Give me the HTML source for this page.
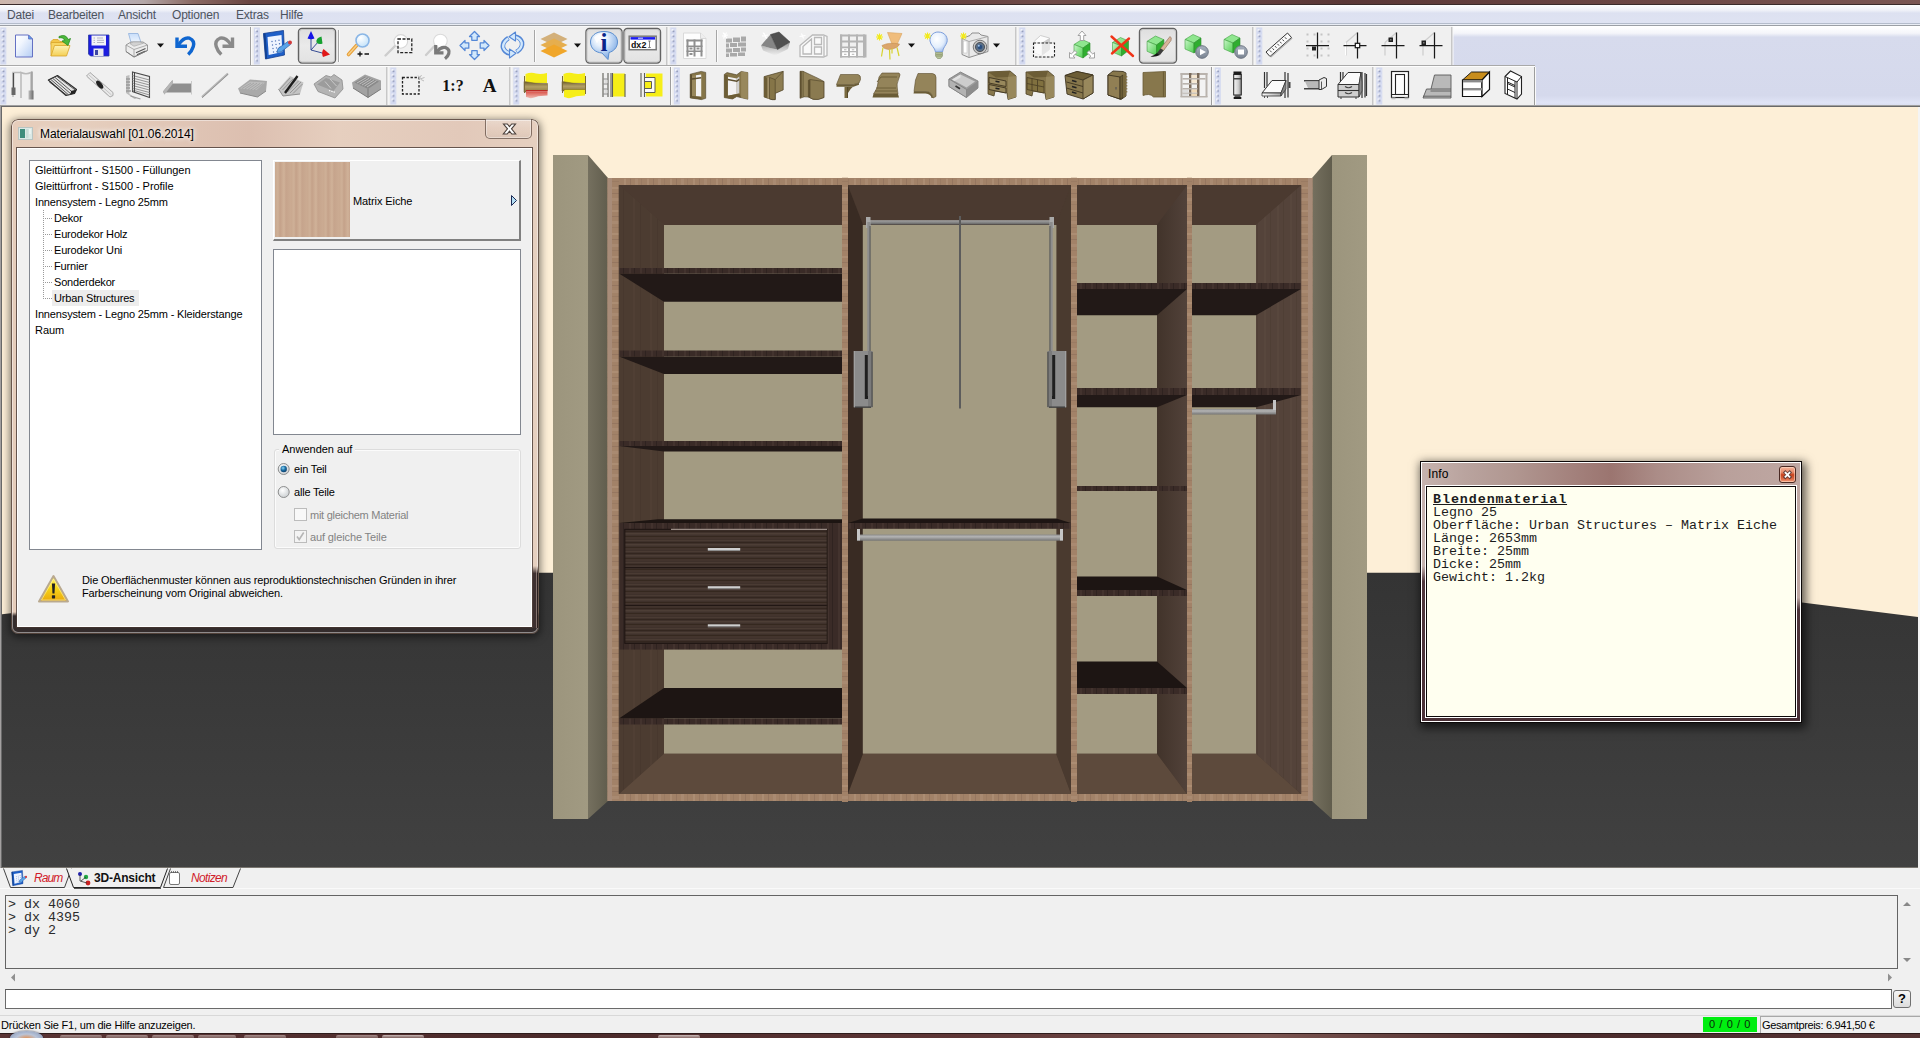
<!DOCTYPE html>
<html lang="de"><head><meta charset="utf-8"><title>Materialauswahl</title>
<style>
html,body{margin:0;padding:0}
body{width:1920px;height:1038px;position:relative;overflow:hidden;background:#f0f0f0;font-family:"Liberation Sans",sans-serif;font-size:11px;color:#000}
.abs{position:absolute}
div,span{box-sizing:border-box}
#topstrip{left:0;top:0;width:1920px;height:5px;background:linear-gradient(90deg,#cdb6ab 0,#c4b4b8 3%,#b9b2c0 5%,#b4a7a8 7.500%,#8b6a64 10%,#6a4542 13%,#5c3837 20%,#6d4946 33%,#5d3a3a 45%,#714c49 55%,#5a3737 70%,#6b4644 85%,#7a5653 100%)}
#topstrip:after{content:"";position:absolute;left:0;top:4px;width:1920px;height:1px;background:#3a2a2a}
#menubar{left:0;top:5px;width:1920px;height:18px;background:linear-gradient(180deg,#fdfdfe 0,#eef0f8 30%,#dde1f1 45%,#dfe3f2 100%)}
#menubar span{position:absolute;top:3px;font-size:12px;color:#4d545e;white-space:nowrap;letter-spacing:-0.2px}
#menuline{left:0;top:23px;width:1920px;height:4px;background:linear-gradient(180deg,#b4bccb 0,#b4bccb 25%,#e9edf5 25%,#e9edf5 50%,#9b9fa5 50%,#9b9fa5 75%,#fff 75%)}
#tbbg{left:0;top:27px;width:1920px;height:78px;background:linear-gradient(180deg,#fff 0,#f4f5fa 8%,#d7dbed 13%,#d5d9ec 88%,#e0e4f6 97%,#dadef0 100%)}
.tb{position:absolute;background:#f0f0f0;border-right:1px solid #b8b8b8}
#viewborder{left:0;top:105px;width:1920px;height:763px;background:#696969;border-top:1px solid #a0a0a0;border-left:1px solid #a3a0a0}
#viewborder2{left:1918px;top:107px;width:2px;height:761px;background:#f4f4f4}
.grip{position:absolute;width:3px;background-image:repeating-linear-gradient(180deg,#aab3d8 0,#aab3d8 2px,rgba(255,255,255,.8) 2px,rgba(255,255,255,.8) 3px,transparent 3px,transparent 4px)}
</style></head><body>
<div id="topstrip" class="abs"></div>
<div id="menubar" class="abs"><span style="left:7px">Datei</span><span style="left:48px">Bearbeiten</span><span style="left:118px">Ansicht</span><span style="left:172px">Optionen</span><span style="left:236px">Extras</span><span style="left:280px">Hilfe</span></div>
<div id="menuline" class="abs"></div>
<div id="tbbg" class="abs"></div>
<div id="viewborder" class="abs"></div>

<svg width="1920" height="1038" viewBox="0 0 1920 1038" style="position:absolute;left:0;top:0"><defs>
<linearGradient id="blf" x1="0" x2="1" y1="0" y2="0"><stop offset="0" stop-color="#9c957d"/><stop offset="1" stop-color="#a19a82"/></linearGradient>
<linearGradient id="bls" x1="0" x2="1" y1="0" y2="0"><stop offset="0" stop-color="#75705f"/><stop offset="1" stop-color="#615d4d"/></linearGradient>
<linearGradient id="flr" x1="0" x2="0" y1="0" y2="1"><stop offset="0" stop-color="#343434"/><stop offset="1" stop-color="#414141"/></linearGradient>
<pattern id="edgeV" width="7" height="23" patternUnits="userSpaceOnUse"><rect width="7" height="23" fill="#a28268"/><rect y="3" width="7" height="2" fill="#ac8d73"/><rect y="9" width="7" height="1" fill="#957660"/><rect y="14" width="7" height="3" fill="#a98a71"/><rect y="20" width="7" height="1" fill="#9a7b63"/></pattern>
<pattern id="edgeH" width="23" height="7" patternUnits="userSpaceOnUse"><rect width="23" height="7" fill="#a28268"/><rect x="3" width="2" height="7" fill="#ac8d73"/><rect x="9" width="1" height="7" fill="#957660"/><rect x="14" width="3" height="7" fill="#a98a71"/><rect x="20" width="1" height="7" fill="#9a7b63"/></pattern>
<pattern id="inw" width="17" height="8" patternUnits="userSpaceOnUse"><rect width="17" height="8" fill="#4c3c31"/><rect x="4" width="2" height="8" fill="#503f34"/><rect x="11" width="1" height="8" fill="#48382e"/></pattern>
<linearGradient id="inw3" x1="0" x2="1" y1="0" y2="0"><stop offset="0" stop-color="#41332a"/><stop offset="1" stop-color="#52423a"/></linearGradient>
<pattern id="inw4" width="13" height="8" patternUnits="userSpaceOnUse"><rect width="13" height="8" fill="#54433a"/><rect x="3" width="2" height="8" fill="#58473d"/><rect x="9" width="1" height="8" fill="#4f3f35"/></pattern>
<pattern id="she" width="11" height="8" patternUnits="userSpaceOnUse"><rect width="11" height="8" fill="#3a2b27"/><rect x="2" width="2" height="8" fill="#43332e"/><rect x="7" width="1" height="8" fill="#2f2320"/></pattern>
<pattern id="drw" width="40" height="11" patternUnits="userSpaceOnUse"><rect width="40" height="11" fill="#3f312b"/><rect y="1" width="40" height="1" fill="#4a3b33"/><rect y="3" width="40" height="1" fill="#33261f"/><rect y="5" width="40" height="1.500" fill="#4d3e36"/><rect y="8" width="40" height="1" fill="#35281f"/><rect y="9.500" width="40" height="1" fill="#46372f"/></pattern>
<linearGradient id="rod2" x1="0" x2="0" y1="0" y2="1"><stop offset="0" stop-color="#a5a5a5"/><stop offset="0.5" stop-color="#868686"/><stop offset="1" stop-color="#5e5e5e"/></linearGradient>
<linearGradient id="rod" x1="0" x2="0" y1="0" y2="1"><stop offset="0" stop-color="#8c8c8c"/><stop offset="0.35" stop-color="#b4b4b4"/><stop offset="1" stop-color="#747474"/></linearGradient>
<clipPath id="vp"><rect x="2" y="107" width="1916" height="760.600"/></clipPath>
</defs>
<g clip-path="url(#vp)">
<rect x="0.0" y="100.0" width="1920.0" height="780.0" fill="#fdefd7" />
<polygon points="0.0,614.5 359.0,572.7 1564.0,572.7 1920.0,617.3 1920.0,870.0 0.0,870.0" fill="url(#flr)" />
<polygon points="553.0,155.0 588.0,155.0 588.0,819.0 553.0,819.0" fill="url(#blf)" />
<polygon points="588.0,155.0 608.0,178.0 608.0,801.0 588.0,819.0" fill="url(#bls)" />
<polygon points="1332.0,155.0 1367.0,155.0 1367.0,819.0 1332.0,819.0" fill="url(#blf)" />
<polygon points="1332.0,155.0 1312.0,178.0 1312.0,801.0 1332.0,819.0" fill="url(#bls)" />
<rect x="607.5" y="178.0" width="705.0" height="623.0" fill="url(#edgeV)" />
<rect x="607.5" y="178.0" width="4.5" height="623.0" fill="#a88c79" />
<rect x="1308.0" y="178.0" width="4.5" height="623.0" fill="#a88c79" />
<rect x="619.0" y="178.7" width="682.0" height="6.3" fill="url(#edgeH)" />
<rect x="619.0" y="794.0" width="682.0" height="7.0" fill="url(#edgeH)" />
<rect x="619.0" y="185.0" width="223.0" height="609.0" fill="#4c3c31" />
<polygon points="619.0,185.0 842.0,185.0 842.0,225.0 664.0,225.0" fill="#4b3a30" />
<polygon points="619.0,794.0 842.0,794.0 842.0,753.6 664.0,753.6" fill="#5d4a3c" />
<polygon points="618.7,185.0 664.3,225.0 664.3,753.6 618.7,794.0" fill="url(#inw)" />
<rect x="664.0" y="225.0" width="178.0" height="528.6" fill="#a39b82" />
<rect x="848.0" y="185.0" width="223.0" height="609.0" fill="#4c3c31" />
<polygon points="848.0,185.0 1071.0,185.0 1056.3,225.0 862.8,225.0" fill="#4b3a30" />
<polygon points="848.0,794.0 1071.0,794.0 1056.3,753.6 862.8,753.6" fill="#5d4a3c" />
<polygon points="847.7,185.0 863.1,225.0 863.1,753.6 847.7,794.0" fill="#392b23" />
<polygon points="1071.3,185.0 1056.0,225.0 1056.0,753.6 1071.3,794.0" fill="#4a3a2f" />
<rect x="862.8" y="225.0" width="193.6" height="528.6" fill="#a39b82" />
<rect x="1077.0" y="185.0" width="110.0" height="609.0" fill="#4c3c31" />
<polygon points="1077.0,185.0 1187.0,185.0 1157.0,225.0 1077.0,225.0" fill="#4b3a30" />
<polygon points="1077.0,794.0 1187.0,794.0 1157.0,753.6 1077.0,753.6" fill="#5d4a3c" />
<polygon points="1187.3,185.0 1156.7,225.0 1156.7,753.6 1187.3,794.0" fill="url(#inw3)" />
<rect x="1077.0" y="225.0" width="80.0" height="528.6" fill="#a39b82" />
<rect x="1192.0" y="185.0" width="109.0" height="609.0" fill="#4c3c31" />
<polygon points="1192.0,185.0 1301.0,185.0 1256.0,225.0 1192.0,225.0" fill="#4b3a30" />
<polygon points="1192.0,794.0 1301.0,794.0 1256.0,753.6 1192.0,753.6" fill="#5d4a3c" />
<polygon points="1301.3,185.0 1255.7,225.0 1255.7,753.6 1301.3,794.0" fill="url(#inw4)" />
<rect x="1192.0" y="225.0" width="64.0" height="528.6" fill="#a39b82" />
<rect x="842.0" y="177.7" width="6.0" height="624.3" fill="url(#edgeV)" />
<rect x="1071.0" y="177.7" width="6.0" height="624.3" fill="url(#edgeV)" />
<rect x="1187.0" y="177.7" width="5.0" height="624.3" fill="url(#edgeV)" />
<clipPath id="c0"><rect x="619" y="178.7" width="223" height="622.3"/></clipPath>
<clipPath id="c1"><rect x="848" y="178.7" width="223" height="622.3"/></clipPath>
<clipPath id="c2"><rect x="1077" y="178.7" width="110" height="622.3"/></clipPath>
<clipPath id="c3"><rect x="1192" y="178.7" width="109" height="622.3"/></clipPath>
<polygon points="619.0,273.5 842.0,273.5 857.6,301.8 664.0,301.8" fill="#221917" clip-path="url(#c0)"/>
<rect x="619.0" y="268.0" width="223.0" height="5.5" fill="url(#she)" />
<polygon points="619.0,356.5 842.0,356.5 857.6,373.9 664.0,373.9" fill="#221917" clip-path="url(#c0)"/>
<rect x="619.0" y="350.5" width="223.0" height="6.0" fill="url(#she)" />
<polygon points="619.0,446.0 842.0,446.0 857.6,451.5 664.0,451.5" fill="#221917" clip-path="url(#c0)"/>
<rect x="619.0" y="441.0" width="223.0" height="5.0" fill="url(#she)" />
<polygon points="619.0,718.5 842.0,718.5 857.6,688.1 664.0,688.1" fill="#1d1513" clip-path="url(#c0)"/>
<rect x="619.0" y="718.5" width="223.0" height="6.0" fill="url(#she)" />
<polygon points="619.0,523.0 842.0,523.0 842.0,519.2 658.0,519.2" fill="#1d1512" />
<rect x="619.0" y="523.0" width="223.0" height="126.6" fill="url(#she)" />
<rect x="625.0" y="530.0" width="202.0" height="37.0" fill="url(#drw)" />
<rect x="625.0" y="568.0" width="202.0" height="37.0" fill="url(#drw)" />
<rect x="625.0" y="606.0" width="202.0" height="37.0" fill="url(#drw)" />
<rect x="624.5" y="528.8" width="203.0" height="1.4" fill="#211714" />
<rect x="624.5" y="566.8" width="203.0" height="1.4" fill="#211714" />
<rect x="624.5" y="604.8" width="203.0" height="1.4" fill="#211714" />
<rect x="624.5" y="642.6" width="203.0" height="1.4" fill="#211714" />
<rect x="624.2" y="529.0" width="1.2" height="114.5" fill="#211714" />
<rect x="826.6" y="529.0" width="1.2" height="114.5" fill="#2a1e1a" />
<rect x="671.0" y="528.8" width="156.0" height="1.0" fill="#b9aaa2" />
<rect x="707.8" y="548.0" width="32.4" height="2.0" fill="#cfcfcf" />
<rect x="707.8" y="550.0" width="32.4" height="1.0" fill="#8e8e8e" />
<rect x="707.8" y="586.2" width="32.4" height="2.0" fill="#cfcfcf" />
<rect x="707.8" y="588.2" width="32.4" height="1.0" fill="#8e8e8e" />
<rect x="707.8" y="624.3" width="32.4" height="2.0" fill="#cfcfcf" />
<rect x="707.8" y="626.3" width="32.4" height="1.0" fill="#8e8e8e" />
<polygon points="848.0,523.0 1071.0,523.0 1056.3,518.4 862.8,518.4" fill="#1d1513" clip-path="url(#c1)"/>
<rect x="848.0" y="523.0" width="223.0" height="5.8" fill="url(#she)" />
<rect x="857.0" y="534.5" width="206.0" height="6.2" fill="url(#rod)" />
<rect x="857.0" y="529.0" width="3.0" height="11.5" fill="#c6c6c6" />
<rect x="1060.0" y="529.0" width="3.0" height="11.5" fill="#c6c6c6" />
<rect x="868.0" y="220.2" width="184.0" height="4.4" fill="url(#rod2)" />
<rect x="866.0" y="217.0" width="4.5" height="11.0" fill="#a9a9a9" />
<rect x="867.3" y="222.0" width="3.0" height="130.0" fill="#8d8d8d" />
<rect x="869.6" y="226.0" width="0.9" height="126.0" fill="#4e4e4e" />
<rect x="853.8" y="351.0" width="18.6" height="56.3" fill="#8b8b8b" />
<rect x="853.8" y="351.0" width="1.0" height="56.3" fill="#a5a5a5" />
<rect x="864.8" y="355.0" width="3.0" height="44.0" fill="#1f1f1f" />
<rect x="866.0" y="396.0" width="3.5" height="3.0" fill="#1f1f1f" />
<rect x="868.0" y="351.0" width="4.4" height="56.3" fill="#7a7a7a" />
<rect x="871.6" y="352.0" width="0.9" height="55.0" fill="#3c3c3c" />
<rect x="855.0" y="406.5" width="16.0" height="1.3" fill="#3c3c3c" />
<rect x="1049.5" y="217.0" width="4.5" height="11.0" fill="#a9a9a9" />
<rect x="1049.7" y="222.0" width="3.0" height="130.0" fill="#8d8d8d" />
<rect x="1049.5" y="226.0" width="0.9" height="126.0" fill="#4e4e4e" />
<rect x="1047.6" y="351.0" width="18.6" height="56.3" fill="#8b8b8b" />
<rect x="1065.2" y="351.0" width="1.0" height="56.3" fill="#a5a5a5" />
<rect x="1052.2" y="355.0" width="3.0" height="44.0" fill="#1f1f1f" />
<rect x="1050.5" y="396.0" width="3.5" height="3.0" fill="#1f1f1f" />
<rect x="1047.6" y="351.0" width="4.4" height="56.3" fill="#7a7a7a" />
<rect x="1047.5" y="352.0" width="0.9" height="55.0" fill="#3c3c3c" />
<rect x="1049.0" y="406.5" width="16.0" height="1.3" fill="#3c3c3c" />
<rect x="959.0" y="216.0" width="2.0" height="192.5" fill="#5c5c5c" />
<polygon points="1077.0,289.0 1187.0,289.0 1157.0,315.3 1061.6,315.3" fill="#221917" clip-path="url(#c2)"/>
<rect x="1077.0" y="283.0" width="110.0" height="6.0" fill="url(#she)" />
<polygon points="1077.0,395.0 1187.0,395.0 1157.0,407.3 1061.6,407.3" fill="#221917" clip-path="url(#c2)"/>
<rect x="1077.0" y="388.0" width="110.0" height="7.0" fill="url(#she)" />
<rect x="1077.0" y="486.0" width="110.0" height="5.0" fill="url(#she)" />
<polygon points="1077.0,590.0 1187.0,590.0 1157.0,576.5 1061.6,576.5" fill="#1d1513" clip-path="url(#c2)"/>
<rect x="1077.0" y="590.0" width="110.0" height="6.0" fill="url(#she)" />
<polygon points="1077.0,688.0 1187.0,688.0 1157.0,661.6 1061.6,661.6" fill="#1d1513" clip-path="url(#c2)"/>
<rect x="1077.0" y="688.0" width="110.0" height="6.0" fill="url(#she)" />
<polygon points="1192.0,289.0 1301.0,289.0 1256.0,315.3 1161.4,315.3" fill="#221917" clip-path="url(#c3)"/>
<rect x="1192.0" y="283.0" width="109.0" height="6.0" fill="url(#she)" />
<polygon points="1192.0,395.0 1301.0,395.0 1256.0,407.3 1161.4,407.3" fill="#221917" clip-path="url(#c3)"/>
<rect x="1192.0" y="388.0" width="109.0" height="7.0" fill="url(#she)" />
<rect x="1192.0" y="409.0" width="84.0" height="5.5" fill="url(#rod)" />
<rect x="1273.0" y="400.0" width="3.0" height="10.0" fill="#c4c4c4" />
</g></svg>
<svg class="abs" style="left:0;top:0" width="1920" height="108" viewBox="0 0 1920 108"><defs>
<linearGradient id="gNew" x1="0" y1="0" x2="1" y2="1"><stop offset="0" stop-color="#fff"/><stop offset=".35" stop-color="#f1f6fe"/><stop offset="1" stop-color="#b4cdf4"/></linearGradient>
<linearGradient id="gFold" x1="0" y1="0" x2="0" y2="1"><stop offset="0" stop-color="#fdf3b6"/><stop offset="1" stop-color="#f4cf55"/></linearGradient>
<linearGradient id="gPap" x1="0" y1="0" x2="0" y2="1"><stop offset="0" stop-color="#c8defa"/><stop offset="1" stop-color="#f4f8fe"/></linearGradient>
<radialGradient id="gLens" cx=".35" cy=".3" r=".8"><stop offset="0" stop-color="#fff"/><stop offset="1" stop-color="#bfe0f9"/></radialGradient>
<radialGradient id="gInfo" cx=".38" cy=".28" r=".8"><stop offset="0" stop-color="#fff"/><stop offset=".3" stop-color="#e6f0fc"/><stop offset=".65" stop-color="#a9c8ef"/><stop offset="1" stop-color="#6b9ade"/></radialGradient>
<radialGradient id="gBulb" cx=".4" cy=".35" r=".7"><stop offset="0" stop-color="#fff"/><stop offset=".6" stop-color="#e3eefc"/><stop offset="1" stop-color="#9cb9ea"/></radialGradient>
<linearGradient id="gRoofSh" x1="0" y1="0" x2="0" y2="1"><stop offset="0" stop-color="#9a9a9a"/><stop offset=".5" stop-color="#c9c9c9"/><stop offset="1" stop-color="#f0f0f0"/></linearGradient>
<linearGradient id="gCubeL" x1="0" y1="0" x2="1" y2="1"><stop offset="0" stop-color="#c9f5c9"/><stop offset="1" stop-color="#4fcf4f"/></linearGradient>
<linearGradient id="gBtn" x1="0" y1="0" x2="0" y2="1"><stop offset="0" stop-color="#a9b2bf"/><stop offset="1" stop-color="#7a8492"/></linearGradient>
<linearGradient id="gGrayV" x1="0" y1="0" x2="1" y2="0"><stop offset="0" stop-color="#bdbdbd"/><stop offset="1" stop-color="#6a6a6a"/></linearGradient>
<linearGradient id="gBr" x1="0" y1="0" x2="0" y2="1"><stop offset="0" stop-color="#6e5c2c"/><stop offset=".5" stop-color="#b3a067"/><stop offset="1" stop-color="#8a7740"/></linearGradient>
<linearGradient id="gRedF" x1="0" y1="0" x2="0" y2="1"><stop offset="0" stop-color="#d9534a"/><stop offset="1" stop-color="#f0b9b0"/></linearGradient>
<linearGradient id="gLeg" x1="0" y1="0" x2="1" y2="0"><stop offset="0" stop-color="#f7f7f7"/><stop offset=".6" stop-color="#cfcfcf"/><stop offset="1" stop-color="#8a8a8a"/></linearGradient>
<linearGradient id="gShelfF" x1="0" y1="0" x2="1" y2="0"><stop offset="0" stop-color="#fff"/><stop offset="1" stop-color="#aaa"/></linearGradient>
<linearGradient id="gPress" x1="0" y1="0" x2="0" y2="1"><stop offset="0" stop-color="#dedede"/><stop offset=".5" stop-color="#eaeaea"/><stop offset="1" stop-color="#e2e2e2"/></linearGradient>
<pattern id="pGrip" width="4" height="4.900" patternUnits="userSpaceOnUse"><rect x=".2" y=".3" width="2" height="2" fill="#fff"/><rect x="1.400" y="1.500" width="1.700" height="1.700" fill="#8a93b4"/></pattern>
</defs>
<rect x="0" y="26.500" width="1452.500" height="38.500" fill="#f0f0f0"/>
<rect x="0" y="66.500" width="1535" height="38.500" fill="#f0f0f0"/>
<rect x="0" y="65" width="1535" height="1" fill="#a9a9a9"/><rect x="0" y="66" width="1535" height="1" fill="#fdfdfd"/>
<rect x="250.0" y="27" width="1" height="38" fill="#9d9d9d"/><rect x="251.0" y="27" width="1" height="38" fill="#fafafa"/>
<rect x="0.3" y="27.5" width="6" height="37" fill="#d4daf0"/><g transform="translate(1.3,29.0)"><rect width="4" height="34" fill="url(#pGrip)"/></g>
<rect x="666.5" y="27" width="1" height="38" fill="#9d9d9d"/><rect x="667.5" y="27" width="1" height="38" fill="#fafafa"/>
<rect x="253.8" y="27.5" width="6" height="37" fill="#d4daf0"/><g transform="translate(254.8,29.0)"><rect width="4" height="34" fill="url(#pGrip)"/></g>
<rect x="1015.5" y="27" width="1" height="38" fill="#9d9d9d"/><rect x="1016.5" y="27" width="1" height="38" fill="#fafafa"/>
<rect x="670.3" y="27.5" width="6" height="37" fill="#d4daf0"/><g transform="translate(671.3,29.0)"><rect width="4" height="34" fill="url(#pGrip)"/></g>
<rect x="1252.5" y="27" width="1" height="38" fill="#9d9d9d"/><rect x="1253.5" y="27" width="1" height="38" fill="#fafafa"/>
<rect x="1019.3" y="27.5" width="6" height="37" fill="#d4daf0"/><g transform="translate(1020.3,29.0)"><rect width="4" height="34" fill="url(#pGrip)"/></g>
<rect x="1451.5" y="27" width="1" height="38" fill="#9d9d9d"/><rect x="1452.5" y="27" width="1" height="38" fill="#fafafa"/>
<rect x="1256.3" y="27.5" width="6" height="37" fill="#d4daf0"/><g transform="translate(1257.3,29.0)"><rect width="4" height="34" fill="url(#pGrip)"/></g>
<rect x="386.5" y="67" width="1" height="38" fill="#9d9d9d"/><rect x="387.5" y="67" width="1" height="38" fill="#fafafa"/>
<rect x="0.3" y="67.5" width="6" height="37" fill="#d4daf0"/><g transform="translate(1.3,69.0)"><rect width="4" height="34" fill="url(#pGrip)"/></g>
<rect x="509.5" y="67" width="1" height="38" fill="#9d9d9d"/><rect x="510.5" y="67" width="1" height="38" fill="#fafafa"/>
<rect x="390.3" y="67.5" width="6" height="37" fill="#d4daf0"/><g transform="translate(391.3,69.0)"><rect width="4" height="34" fill="url(#pGrip)"/></g>
<rect x="670.0" y="67" width="1" height="38" fill="#9d9d9d"/><rect x="671.0" y="67" width="1" height="38" fill="#fafafa"/>
<rect x="513.3" y="67.5" width="6" height="37" fill="#d4daf0"/><g transform="translate(514.3,69.0)"><rect width="4" height="34" fill="url(#pGrip)"/></g>
<rect x="1211.0" y="67" width="1" height="38" fill="#9d9d9d"/><rect x="1212.0" y="67" width="1" height="38" fill="#fafafa"/>
<rect x="673.8" y="67.5" width="6" height="37" fill="#d4daf0"/><g transform="translate(674.8,69.0)"><rect width="4" height="34" fill="url(#pGrip)"/></g>
<rect x="1372.5" y="67" width="1" height="38" fill="#9d9d9d"/><rect x="1373.5" y="67" width="1" height="38" fill="#fafafa"/>
<rect x="1214.8" y="67.5" width="6" height="37" fill="#d4daf0"/><g transform="translate(1215.8,69.0)"><rect width="4" height="34" fill="url(#pGrip)"/></g>
<rect x="1534.0" y="67" width="1" height="38" fill="#9d9d9d"/><rect x="1535.0" y="67" width="1" height="38" fill="#fafafa"/>
<rect x="1376.3" y="67.5" width="6" height="37" fill="#d4daf0"/><g transform="translate(1377.3,69.0)"><rect width="4" height="34" fill="url(#pGrip)"/></g>
<rect x="338.0" y="30" width="1" height="32" fill="#a6a6a6"/><rect x="339.0" y="30" width="1" height="32" fill="#fbfbfb"/>
<rect x="534.0" y="30" width="1" height="32" fill="#a6a6a6"/><rect x="535.0" y="30" width="1" height="32" fill="#fbfbfb"/>
<rect x="716.0" y="30" width="1" height="32" fill="#a6a6a6"/><rect x="717.0" y="30" width="1" height="32" fill="#fbfbfb"/>
<rect x="298.5" y="28.500" width="37" height="34.500" rx="3.500" fill="url(#gPress)" stroke="#636363" stroke-width="1.400"/><rect x="299.5" y="29.500" width="35" height="32.500" rx="2.500" fill="none" stroke="#c6c6c6" stroke-width="1"/>
<rect x="586.0" y="28.500" width="36.0" height="34.500" rx="3.500" fill="url(#gPress)" stroke="#636363" stroke-width="1.400"/><rect x="587.0" y="29.500" width="34.0" height="32.500" rx="2.500" fill="none" stroke="#c6c6c6" stroke-width="1"/>
<rect x="624.0" y="28.500" width="36.5" height="34.500" rx="3.500" fill="url(#gPress)" stroke="#636363" stroke-width="1.400"/><rect x="625.0" y="29.500" width="34.5" height="32.500" rx="2.500" fill="none" stroke="#c6c6c6" stroke-width="1"/>
<rect x="1139.5" y="28.500" width="37" height="34.500" rx="3.500" fill="url(#gPress)" stroke="#636363" stroke-width="1.400"/><rect x="1140.5" y="29.500" width="35" height="32.500" rx="2.500" fill="none" stroke="#c6c6c6" stroke-width="1"/>
<g transform="translate(24,45.5)"><path d="M-8.500 -10.500 H4.500 L8.500 -6.500 V11.500 H-8.500z" fill="url(#gNew)" stroke="#6471c4"/><path d="M4.500 -10.500 V-6.500 H8.500z" fill="#5aa0ea" stroke="#6471c4" stroke-width=".8"/></g>
<g transform="translate(61,45.5)"><path d="M-10 -4 l2 -2 h5 l2 2 h7 v3 h-16z" fill="#f3c64a" stroke="#d9a428" stroke-width=".8"/><path d="M-10 10.500 V-3 h15 l1 2 v3" fill="#f7d563" stroke="#d9a428" stroke-width=".8"/><path d="M-10 10.500 L-6.500 0 H9 L5.500 10.500z" fill="url(#gFold)" stroke="#d9a428" stroke-width=".8"/><path d="M-2 -9 q7 -3 9 3 l2.500 -1 l-2.500 7 l-6 -4.500 l2.800 -.6 q-1.500 -3.500 -5.800 -2.500z" fill="#4cb83c" stroke="#2c8f22" stroke-width=".8"/></g>
<g transform="translate(98.5,45.5)"><path d="M-10 -10.500 H10.500 V10.500 H-8 L-10 8.500z" fill="#1c1cdf" stroke="#2a3aa0" stroke-width=".8"/><rect x="-7" y="-10" width="14.500" height="10" fill="#f3f3f7"/><path d="M-5 -7.500 h1.500 m2 0 h6 M-5 -5.200 h1.500 m2 0 h7 M-5 -3 h1.500 m2 0 h7" stroke="#b4b4c4" stroke-width="1"/><rect x="-5" y="3" width="10" height="7.500" fill="#e9e9ef"/><rect x="-3.500" y="4.500" width="3" height="5" fill="#3c46a4"/></g>
<g transform="translate(137,45.5)"><path d="M-8.500 -12 H1 L4.500 -1.500 H-5.500z" fill="url(#gPap)" stroke="#8fb0dc" stroke-width=".8"/><path d="M-11 -.5 L-6 -3.500 H6 L10.500 -.5 V5 L-3 11.500 L-11 6z" fill="#ececec" stroke="#8d8d8d" stroke-width=".9"/><path d="M-11 -.5 L-3 4 L10.500 -.5 M-3 4 V11.500" fill="none" stroke="#9a9a9a" stroke-width=".8"/><path d="M-7 -1.800 L-3 .8 L6.500 -2.200 L3 -3.500 H-4z" fill="#d2d2d2" stroke="#999" stroke-width=".5"/><path d="M-1 7.300 l9.500 -4.200 M0 9.300 l8.500 -3.800" stroke="#555" stroke-width="1.100"/><path d="M-11 6 L-3 11.500 L10.500 5" stroke="#7a7a7a" stroke-width=".9" fill="none"/></g>
<g transform="translate(160.5,45.5)"><path d="M-3.500 -2 H3.500 L0 2z" fill="#111"/></g>
<g transform="translate(185,45.5)"><path d="M-8 -8 V.8 H2" fill="none" stroke="#0f66d0" stroke-width="3.400" stroke-linejoin="miter"/><path d="M-6.500 -.8 Q-1 -8.800 4.500 -7.300 Q10 -5 8.300 1 Q7 5.500 3.200 9" fill="none" stroke="#0f66d0" stroke-width="3.400"/></g>
<g transform="translate(224.5,45.5)"><path d="M8 -8 V.8 H-2" fill="none" stroke="#8a8a8a" stroke-width="3.400" stroke-linejoin="miter"/><path d="M6.500 -.8 Q1 -8.800 -4.500 -7.300 Q-10 -5 -8.300 1 Q-7 5.500 -3.200 9" fill="none" stroke="#8a8a8a" stroke-width="3.400"/></g>
<g transform="translate(278,45.5)"><path d="M-14.500 -12 L5.500 -15 L6.500 9.500 L-12.500 13.500z" fill="#1e5fc8" stroke="#153f8f" stroke-width=".8"/><path d="M-12.500 13.500 L-14.500 -12 L-12.500 -12.300 L-10.800 13z" fill="#12408f"/><path d="M-10.500 -8.500 L3.500 -10.500 L4.300 6.500 L-9.300 9.500z" fill="#eef4ff"/><g fill="#4a6fb5"><circle cx="-6" cy="-4" r=".7"/><circle cx="-2.500" cy="-4.600" r=".7"/><circle cx="1" cy="-5.200" r=".7"/><circle cx="-5.500" cy="-.5" r=".7"/><circle cx="-2" cy="-1.100" r=".7"/><circle cx="1.500" cy="-1.700" r=".7"/><circle cx="-5" cy="3" r=".7"/><circle cx="-1.500" cy="2.400" r=".7"/><circle cx="2" cy="1.800" r=".7"/><circle cx="-4.500" cy="6.500" r=".7"/><circle cx="-1" cy="5.900" r=".7"/></g><path d="M0 3 L10 -4 L12.500 -1 L3 6.500 L-1 7z" fill="#5aa4e8" stroke="#2b5fa8" stroke-width=".7"/><circle cx="12" cy="-3" r="2" fill="#d23b3b"/></g>
<g transform="translate(317,45.5)"><g transform="translate(0,-1.500)"><path d="M-6 -7 V6 L7 9.500 M-6 6 L2 -3" stroke="#223a8a" stroke-width=".9" fill="none"/><path d="M-6 -13 L-9.500 -5.500 Q-6 -4 -2.500 -5.500z" fill="#1414e6"/><path d="M4.500 -7.500 Q-1.500 -6 -.5 -1.500 Q2 1 5.500 -.5z" fill="#16a030"/><path d="M13 10.500 L6.500 5 Q4 8.500 6 13z" fill="#e01818"/></g></g>
<g transform="translate(358.5,45.5)"><path d="M-10 9 L-2 0" stroke="#e8a03a" stroke-width="3.600" stroke-linecap="round"/><path d="M-10 9 L-2 0" stroke="#f6d08a" stroke-width="1.300" stroke-linecap="round"/><circle cx="4" cy="-5" r="6.500" fill="url(#gLens)" stroke="#8ab6e6" stroke-width="1.600"/><path d="M-1 8.500 h5 M1.500 6 v5 M6 8.500 h4.500" stroke="#111" stroke-width="1.300"/></g>
<g transform="translate(399,45.5)"><path d="M-13.500 10 L-4 .5" stroke="#cdcdcd" stroke-width="2.400" stroke-linecap="round"/><circle cx="1.800" cy="-4.100" r="6.800" fill="#fff" stroke="#d6d6d6" stroke-width="1.100"/><rect x="-1" y="-6.500" width="13.800" height="13.600" fill="none" stroke="#222" stroke-width="1.300" stroke-dasharray="3 1.500"/></g>
<g transform="translate(438,45.5)"><path d="M-12 9.500 L-4 1" stroke="#cdcdcd" stroke-width="2.400" stroke-linecap="round"/><circle cx="2.400" cy="-4.500" r="6.800" fill="#fff" stroke="#dadada" stroke-width="1.100"/><path d="M-2.300 -.5 V7.300 H5.500" fill="none" stroke="#7a7a7a" stroke-width="3.200"/><path d="M-1 6 Q3 .8 7.500 2 Q12 4 10.800 8 Q10 11 7 13.200" fill="none" stroke="#7a7a7a" stroke-width="3.200"/></g>
<g transform="translate(474.5,45.5)"><g fill="#d2e8fc" stroke="#5588d6" stroke-width="1.250" stroke-linejoin="round"><path d="M0 -14 L5 -9 H2.700 V-5.200 H-2.700 V-9 H-5z"/><path d="M0 14 L5 9 H2.700 V5.200 H-2.700 V9 H-5z"/><path d="M-14.500 0 L-9.500 -5 V-2.700 H-5.700 V2.700 H-9.500 V5z"/><path d="M14.500 0 L9.500 -5 V-2.700 H5.700 V2.700 H9.500 V5z"/></g></g>
<g transform="translate(512.5,45.5)"><g fill="none" stroke-linecap="butt"><path d="M-4 -7.500 Q-10.500 -3.500 -9.500 2 Q-8 7 -2.500 8" stroke="#5588d6" stroke-width="4.600"/><path d="M4 6.500 Q10.500 2.500 9.500 -3 Q8 -8 2.500 -9" stroke="#5588d6" stroke-width="4.600"/><path d="M-4.300 -7 Q-10 -3.300 -9.200 2 Q-7.800 6.300 -2.500 7.700" stroke="#d2e8fc" stroke-width="2.400"/><path d="M4.300 6 Q10 2.300 9.200 -3 Q7.800 -7.300 2.500 -8.700" stroke="#d2e8fc" stroke-width="2.400"/></g><path d="M-3 3.500 L3.500 7.800 L-3 12.500z" fill="#d2e8fc" stroke="#5588d6" stroke-width="1.100" stroke-linejoin="round"/><path d="M3 -4.500 L-3.500 -8.800 L3 -13.500z" fill="#d2e8fc" stroke="#5588d6" stroke-width="1.100" stroke-linejoin="round"/></g>
<g transform="translate(554,45.5)"><path d="M0 -13 L13.500 -6.500 L0 0 L-13.500 -6.500z" fill="#d3b07a"/><path d="M0 -7 L13.500 -.5 L0 6 L-13.500 -.5z" fill="#e6ae4e"/><path d="M0 -1 L13.500 5.500 L0 12 L-13.500 5.500z" fill="#f0a62a"/></g>
<g transform="translate(577.5,45.5)"><path d="M-3.500 -2 H3.500 L0 2z" fill="#111"/></g>
<g transform="translate(604,45.5)"><path d="M0 -14 C9 -14 13.500 -9 13.500 -3.500 C13.500 2.500 9 6 5 7 L4 14 L-2 7.500 C-9 7 -13.500 2.500 -13.500 -3.500 C-13.500 -9 -9 -14 0 -14z" fill="url(#gInfo)" stroke="#5c8fcf" stroke-width="1"/><path d="M-10 -8 Q-5 -13 3 -12 Q-4 -9 -7 -2z" fill="#fff" opacity=".8"/><text x="0" y="5.500" font-family="Liberation Serif,serif" font-weight="bold" font-size="25" text-anchor="middle" fill="#0a2488">i</text></g>
<g transform="translate(642,45.5)"><rect x="-12.800" y="-9.300" width="27" height="13.500" fill="#fff" stroke="#7a7a7a" stroke-width="1.500"/><rect x="-11.500" y="-8.400" width="24.500" height="2.500" fill="#1a1af0"/><rect x="-4" y="-7.800" width="5" height="1" fill="#dfe3ff"/><text x="-11" y="2.300" font-family="Liberation Mono,monospace" font-weight="bold" font-size="9" fill="#111" letter-spacing="-.3">dx2</text><path d="M7.500 -4.500 v6.500 m-1.300 -6.500 h2.600 m-2.600 6.500 h2.600" stroke="#666" stroke-width=".8"/></g>
<g transform="translate(694.5,45.5)"><path d="M-11 -12.500 H6 L11.500 -7 V13 H-11z" fill="#fdfdfd" stroke="#dadada" stroke-width="1"/><path d="M6 -12.500 V-7 H11.500" fill="#eee" stroke="#d0d0d0" stroke-width=".8"/><g fill="#8f8f8f"><rect x="-8" y="-6" width="16" height="2"/><rect x="-8" y="-6" width="2" height="17"/><rect x="6" y="-6" width="2" height="17"/><rect x="-1" y="-6" width="2" height="17"/><rect x="-8" y="0" width="16" height="1.500"/><rect x="-8" y="5" width="16" height="1.500"/><rect x="-5" y="2" width="3" height="2"/><rect x="2" y="2" width="3" height="2"/><rect x="-5" y="7.500" width="3" height="2"/></g></g>
<g transform="translate(736,45.5)"><g fill="#a9a9a9"><rect x="-10" y="-7" width="6" height="4"/><rect x="-3" y="-8" width="7" height="4.500"/><rect x="5" y="-9" width="5" height="5"/><rect x="-10" y="-2" width="3" height="4"/><rect x="-6" y="-2.500" width="7" height="4"/><rect x="2" y="-3" width="8" height="4"/><rect x="-10" y="3" width="6" height="4"/><rect x="-3" y="2.500" width="7" height="4"/><rect x="5" y="2" width="5" height="4"/><rect x="-10" y="8" width="3" height="3.500"/><rect x="-6" y="7.500" width="7" height="3.500"/><rect x="2" y="7" width="7" height="3.500"/></g><path d="M-12 -12.500 l2.500 5 m-4.500 -2 l6 -1 m-5 -2.500 l4 6 m-3.500 0 l3 -6" stroke="#fff" stroke-width="1.100"/></g>
<g transform="translate(775,45.5)"><path d="M-14 0 L-5 2.500 L2.500 4 L15 -3.500 L13 3.500 L0 10 L-12 5z" fill="url(#gRoofSh)"/><path d="M-14 0 L-4.500 -11 L2.500 4 L-5 2.500z" fill="#868686"/><path d="M-4.500 -11 L4 -13.500 L15 -3.500 L2.500 4z" fill="#505050" stroke="#3a3a3a" stroke-width=".5"/><path d="M-11 -12.500 l2 5 m-4 -2 l6 -1 m-5 -2.500 l4 6" stroke="#fff" stroke-width="1.100"/></g>
<g transform="translate(813.5,45.5)"><g fill="#fafafa" stroke="#b9b9b9" stroke-width="1.300"><path d="M-13.500 11 V0 L-1 -10.500 H10 L13.500 -9 V10 L10 11.500z"/><path d="M-10.500 8.500 V1 L-2 -6.500 V8.500z M1 -8 H8 V-1 H1z M1 1.500 H8 V8.500 H1z"/><path d="M10.500 -9.500 V11"/></g><path d="M-12 -12 l2 5 m-4 -2 l6 -1" stroke="#fff" stroke-width="1.100"/></g>
<g transform="translate(853,45.5)"><g fill="#b4b4b4"><rect x="-13" y="-11" width="25" height="2"/><rect x="-13" y="-11" width="2.200" height="23"/><rect x="-5" y="-11" width="2" height="23"/><rect x="3" y="-11" width="2" height="23"/><rect x="10" y="-11" width="3.500" height="23"/><rect x="-13" y="-5" width="25" height="2"/><rect x="-13" y="1" width="18" height="2"/><rect x="-13" y="5.500" width="18" height="1.500"/><rect x="-13" y="10.500" width="25" height="1.500"/></g><g fill="#fff"><rect x="-10.800" y="3" width="5.800" height="2.500"/><rect x="-3" y="3" width="6" height="2.500"/><rect x="-10.800" y="7" width="5.800" height="3.500"/><rect x="-3" y="7" width="6" height="3.500"/></g><g fill="#b4b4b4"><rect x="-9" y="3.800" width="2.500" height="1"/><rect x="-1.200" y="3.800" width="2.500" height="1"/><rect x="-9" y="8.300" width="2.500" height="1"/><rect x="-1.200" y="8.300" width="2.500" height="1"/></g></g>
<g transform="translate(891,45.5)"><path d="M-3.500 -13 L11 -12 L6 -1 L1 -1.500z" fill="#f0bd7c" stroke="#d9a25e" stroke-width=".6"/><path d="M-9 0 Q-2 -3.500 8.500 -1.500 Q7 3 -2 4 Q-8 3.500 -9 0z" fill="#dba56a" stroke="#c58f50" stroke-width=".6"/><path d="M-8 2 L-9.500 11 M-1.500 4 L-1 14 M6 2 L8 10.500 M1 3 V8" stroke="#d7d22c" stroke-width="1.200" fill="none"/><path d="M-11.500 -12 v7 m-3.500 -3.500 h7 m-6 -2.500 l5 5 m0 -5 l-5 5" stroke="#f2ea1a" stroke-width="1.100"/></g>
<g transform="translate(911.5,45.5)"><path d="M-3.500 -2 H3.500 L0 2z" fill="#111"/></g>
<g transform="translate(937,45.5)"><path d="M1 -13.500 C9 -13.500 11 -7 10 -3.500 C9 0 6 2 5.500 6.500 H-1.500 C-2 2 -6.500 0 -7 -4.500 C-7.500 -9 -4 -13.500 1 -13.500z" fill="url(#gBulb)" stroke="#7c9edb" stroke-width="1"/><path d="M-1.500 7 H5.500 V10.500 L3.500 13 H.5 L-1.500 10.500z" fill="#b9c49a" stroke="#8a9670" stroke-width=".7"/><path d="M-1 8.800 h6 M-1 10.500 h6" stroke="#7f8a60" stroke-width=".7"/><path d="M-9.500 -13 v7 m-3.500 -3.500 h7 m-6 -2.500 l5 5 m0 -5 l-5 5" stroke="#f2ea1a" stroke-width="1.100"/></g>
<g transform="translate(975,45.5)"><path d="M-13 -7 L-5 -10 L-3 -12.500 H4 L6 -10.500 L13 -9 V6 L-6 12 L-13 9z" fill="#e9e9e9" stroke="#8e8e8e" stroke-width="1"/><path d="M-13 -7 L-6 -4 L13 -9 M-6 -4 V12" fill="none" stroke="#a5a5a5" stroke-width=".9"/><rect x="-11.500" y="-4.500" width="3.500" height="12" fill="#fff" stroke="#bbb" stroke-width=".5"/><circle cx="5" cy="1.500" r="6.800" fill="#c9c9c9" stroke="#777" stroke-width="1"/><circle cx="5" cy="1.500" r="4.600" fill="#5a6f88" stroke="#444" stroke-width=".8"/><circle cx="5" cy="1.500" r="2.300" fill="#2a4f80"/><circle cx="3.800" cy=".3" r="1" fill="#9fc3ea"/><path d="M-11.500 -13 v7 m-3.500 -3.500 h7 m-6 -2.500 l5 5 m0 -5 l-5 5" stroke="#f2ea1a" stroke-width="1.100"/></g>
<g transform="translate(996.5,45.5)"><path d="M-3.500 -2 H3.500 L0 2z" fill="#111"/></g>
<g transform="translate(1043.5,45.5)"><path d="M-9 -4.500 L-3 -10 L6 -7.500 V4 L-2 10 L-9 7z" fill="#fcfcfc" stroke="#c4c4c4" stroke-width=".8"/><path d="M-2 -2.500 L6 -7.500 V4 L-2 10z" fill="#cbcbcb"/><path d="M-9 -4.500 L-2 -2.500 L-2 10 L-9 7z" fill="#f4f4f4"/><rect x="-10" y="-2.500" width="21" height="14" fill="#fff" fill-opacity=".5" stroke="#222" stroke-width="1.100" stroke-dasharray="2.600 1.400"/></g>
<g transform="translate(1082,45.5)"><g transform="translate(0,3)"><path d="M-8 -4 L0 -9 L8 -5.500 L1 -.5z" fill="#8fe68f" stroke="#3fa03f" stroke-width=".6"/><path d="M-8 -4 L1 -.5 V9.500 L-8 5.500z" fill="url(#gCubeL)" stroke="#3fa03f" stroke-width=".6"/><path d="M1 -.5 L8 -5.500 V4 L1 9.500z" fill="#2fae2f" stroke="#2b8f2b" stroke-width=".6"/></g><g fill="#fff" stroke="#9a9a9a" stroke-width=".9" stroke-linejoin="round"><path d="M0 -14.500 L4 -10 H1.700 V-5 H-1.700 V-10 H-4z"/><path d="M-12.500 12.500 L-12.500 7 L-10.800 8.500 L-7 5 L-5 7.200 L-8.800 10.500 L-7 12.500z"/><path d="M12.500 12.500 L12.500 7 L10.800 8.500 L7 5 L5 7.200 L8.800 10.500 L7 12.500z"/></g></g>
<g transform="translate(1121.5,45.5)"><g transform="translate(-1,1)"><path d="M-8 -4 L0 -9 L8 -5.500 L1 -.5z" fill="#8fe68f" stroke="#3fa03f" stroke-width=".6"/><path d="M-8 -4 L1 -.5 V9.500 L-8 5.500z" fill="url(#gCubeL)" stroke="#3fa03f" stroke-width=".6"/><path d="M1 -.5 L8 -5.500 V4 L1 9.500z" fill="#2fae2f" stroke="#2b8f2b" stroke-width=".6"/></g><path d="M-10 -9 L11.500 10.500 M7.500 -7 L-9.500 8" stroke="#f03418" stroke-width="2.400" stroke-linecap="round"/></g>
<g transform="translate(1158,45.5)"><g transform="translate(-2.500,0) scale(1.050)"><path d="M-8 -4 L0 -9 L8 -5.500 L1 -.5z" fill="#8fe68f" stroke="#3fa03f" stroke-width=".6"/><path d="M-8 -4 L1 -.5 V9.500 L-8 5.500z" fill="url(#gCubeL)" stroke="#3fa03f" stroke-width=".6"/><path d="M1 -.5 L8 -5.500 V4 L1 9.500z" fill="#2fae2f" stroke="#2b8f2b" stroke-width=".6"/></g><path d="M12 -9 Q14 -8 13 -5 L5.500 5 L2.500 3z" fill="#d8b49a" stroke="#8a6a55" stroke-width=".6"/><path d="M5.500 5 L2.500 3 L-1 7.500 L2 9.500z" fill="#3c3c3c"/><path d="M-1 7.500 L2 9.500 Q-3 12 -7.500 11 Q-3.500 10 -1 7.500z" fill="#151515"/></g>
<g transform="translate(1196,45.5)"><g transform="translate(-3,-2)"><path d="M-8 -4 L0 -9 L8 -5.500 L1 -.5z" fill="#8fe68f" stroke="#3fa03f" stroke-width=".6"/><path d="M-8 -4 L1 -.5 V9.500 L-8 5.500z" fill="url(#gCubeL)" stroke="#3fa03f" stroke-width=".6"/><path d="M1 -.5 L8 -5.500 V4 L1 9.500z" fill="#2fae2f" stroke="#2b8f2b" stroke-width=".6"/></g><circle cx="6" cy="6.500" r="6.300" fill="url(#gBtn)" stroke="#6e7683" stroke-width="1"/><path d="M4 3.200 L10 6.500 L4 9.800z" fill="#fff"/></g>
<g transform="translate(1235,45.5)"><g transform="translate(-3,-2)"><path d="M-8 -4 L0 -9 L8 -5.500 L1 -.5z" fill="#8fe68f" stroke="#3fa03f" stroke-width=".6"/><path d="M-8 -4 L1 -.5 V9.500 L-8 5.500z" fill="url(#gCubeL)" stroke="#3fa03f" stroke-width=".6"/><path d="M1 -.5 L8 -5.500 V4 L1 9.500z" fill="#2fae2f" stroke="#2b8f2b" stroke-width=".6"/></g><circle cx="6" cy="6.500" r="6.300" fill="url(#gBtn)" stroke="#6e7683" stroke-width="1"/><rect x="3" y="4" width="6" height="5" fill="#fff"/></g>
<g transform="translate(1279,45.5)"><path d="M-13 6.500 L8.500 -12.500 L12.500 -8 L-9 11z" fill="#fafafa" stroke="#333" stroke-width="1"/><path d="M-8.300 11.600 L13.200 -7.400" stroke="#aaa" stroke-width="1.200"/><path d="M-9 5 l1.500 1.700 M-6.500 2.800 l1.500 1.700 M-4 .6 l1.500 1.700 M-1.500 -1.600 l1.500 1.700 M1 -3.800 l1.500 1.700 M3.500 -6 l1.500 1.700 M6 -8.200 l1.500 1.700" stroke="#333" stroke-width=".9"/></g>
<g transform="translate(1317.5,45.5)"><g fill="#c4c4c4"><rect x="-11" y="-12" width="2" height="2"/><rect x="-4" y="-12" width="2" height="2"/><rect x="3" y="-12" width="2" height="2"/><rect x="10" y="-12" width="2" height="2"/><rect x="-11" y="-5" width="2" height="2"/><rect x="3" y="-5" width="2" height="2"/><rect x="10" y="-5" width="2" height="2"/><rect x="-11" y="2" width="2" height="2"/><rect x="3" y="2" width="2" height="2"/><rect x="10" y="2" width="2" height="2"/><rect x="-11" y="9" width="2" height="2"/><rect x="-4" y="9" width="2" height="2"/><rect x="3" y="9" width="2" height="2"/><rect x="10" y="9" width="2" height="2"/></g><path d="M-11.500 0 H11.500 M0 -13 V13" stroke="#1a1a1a" stroke-width="1.250"/><rect x="-5.500" y="1" width="4" height="4" fill="#222"/></g>
<g transform="translate(1355,45.5)"><path d="M-9 -3 L2.500 -13 M-9 -3 V10" stroke="#cfcfcf" stroke-width="1.300" fill="none"/><path d="M-9.500 -3 V10" stroke="#fff" stroke-width="1"/><path d="M-11.500 0 H11.500 M2.500 -13 V13" stroke="#1a1a1a" stroke-width="1.250"/><rect x=".3" y="-2.200" width="4.400" height="4.400" fill="#fff" stroke="#1a1a1a" stroke-width="1.250"/></g>
<g transform="translate(1393,45.5)"><path d="M-8 -3 L3.500 -13 M-8 -3 V10" stroke="#cfcfcf" stroke-width="1.300" fill="none"/><path d="M-11.500 0 H11.500 M3.500 -13 V13" stroke="#1a1a1a" stroke-width="1.250"/><rect x="-4.500" y="-8" width="4.500" height="4.500" fill="#222"/><rect x="-3" y="-6.500" width="1.500" height="1.500" fill="#777"/></g>
<g transform="translate(1431,45.5)"><path d="M-8 -3 L3.500 -13 M-8 -3 V10" stroke="#cfcfcf" stroke-width="1.300" fill="none"/><path d="M-11.500 0 H11.500 M3.500 -13 V13" stroke="#1a1a1a" stroke-width="1.250"/><rect x="-9.500" y="-5" width="4.500" height="4.500" fill="#222"/><rect x="-8" y="-3.500" width="1.500" height="1.500" fill="#777"/></g>
<g transform="translate(23,85)"><path d="M-10 12 V-12.500 H-2 M-2 13 V-12.500 Q3 -10 8 -12.500 V13" stroke="#b9b9b9" stroke-width="1.500" fill="none"/><path d="M-9.500 -12 V4" stroke="#4a4a4a" stroke-width="1.300"/><path d="M9 -13.500 V6" stroke="#9a9a9a" stroke-width="1.500"/><rect x="-11.500" y="2.500" width="4" height="7.500" fill="#666"/><rect x="5.500" y="5.500" width="5" height="9" fill="url(#gGrayV)"/></g>
<g transform="translate(62,85)"><path d="M-13.700 -5 L-4.500 -9.500 L14.500 4.500 L12.500 8.500 L4 10.500z" fill="#e4e4e4" stroke="#2a2a2a" stroke-width="1.100" stroke-linejoin="round"/><path d="M-11.700 -6 L6.500 9.800 M-9.700 -7 L9 9 M-7.500 -8 L11 7.600 M-12.700 -3 L5 10.300 M-5.500 -9 L13.500 5.200" stroke="#333" stroke-width=".8"/><path d="M9 6 L14.500 4.500 L12.500 8.500 L8.500 9.500z" fill="#222"/></g>
<g transform="translate(100,85)"><path d="M-13.500 -9 L-10 -12.500 L13 7.500 L13 10.500 L10 12z" fill="#e9e9e9" stroke="#a8a8a8" stroke-width="1"/><path d="M-11 -10 L11.500 10 M-12.500 -8 L9.500 11.500" stroke="#bdbdbd" stroke-width=".8"/><ellipse cx="0" cy="-.5" rx="2.400" ry="4.800" transform="rotate(-38)" fill="#222"/></g>
<g transform="translate(138.5,85)"><path d="M-12.500 -9 L-9 -10 V9 L-2 13.500 L-4 14 L-12.500 8z" fill="#bdbdbd"/><path d="M-6 -13 L11 -8.500 V12.500 L-6 6.500z" fill="#ececec" stroke="#4a4a4a" stroke-width="1.100"/><path d="M-6 -9.500 L11 -5 M-6 -7 L11 -2.500 M-6 -4.500 L11 0 M-6 -2 L11 2.500 M-6 .5 L11 5 M-6 3 L11 7.500 M-6 5 L11 10" stroke="#8a8a8a" stroke-width=".9"/><path d="M-4 -12.500 V7.200" stroke="#444" stroke-width="1"/><path d="M-12.500 -6 h4 m-4 3 h4 m-4 3 h4 m-4 3 h4 m-4 3 h5 M-8 11 l10 3" stroke="#9a9a9a" stroke-width="1.300"/></g>
<g transform="translate(177.5,85)"><path d="M-14.500 6.500 L-5 -5 L-4.500 -1.500 H14 V7.500 H-12.500 L-13 9.500z" fill="#8f8f8f"/><path d="M-5 -5 L-4.500 -1.500 L-13 9.500 L-14.500 6.500z" fill="#b5b5b5"/><path d="M14 -4 V9.500" stroke="#c9c9c9" stroke-width="1"/></g>
<g transform="translate(215,85)"><path d="M-13 12 L13 -11.500" stroke="#b5b5b5" stroke-width="2.200"/><path d="M-13 12.800 L13 -10.700" stroke="#8a8a8a" stroke-width=".8"/></g>
<g transform="translate(253,85)"><path d="M-15 3.500 L-3 -5.500 L14 -4 L13 6 L4.500 12 L-13 8z" fill="#a9a9a9"/><path d="M-13 3.500 L-3 -3.500 L12 -2.500 L3.500 5z" fill="#bdbdbd"/><path d="M-11 3.500 L-2 -2 M-8 4 L1 -2 M-5 4.400 L4 -1.800 M-2 4.800 L7 -1.600 M1 5 L10 -1.400" stroke="#9c9c9c" stroke-width=".7"/><path d="M-13 8 L4.500 12 L13 6" stroke="#8a8a8a" stroke-width="1" fill="none"/></g>
<g transform="translate(291,85)"><path d="M-12.500 4 L-1 -9 L12.500 -2.500 L9 9 L-8 11z" fill="#c4c4c4"/><path d="M-11 4 L-1 -7 M-8.500 5 L2 -6 M-6 6 L5 -5 M-3.500 7 L7.500 -4 M-1 8 L10 -3 M2 8.500 L11.500 -1" stroke="#909090" stroke-width=".9"/><path d="M-6 8 L6.500 -9" stroke="#1d1d1d" stroke-width="2.400"/><path d="M-12.500 4 L-8 11 L9 9" stroke="#8d8d8d" stroke-width="1" fill="none"/></g>
<g transform="translate(329,85)"><path d="M-15 -1 L-3 -9.500 L2 -8 L5 -10.500 L13 -5 L14 4 L6 13 L-11 6.500z" fill="#b4b4b4" stroke="#8c8c8c" stroke-width=".8"/><path d="M-12 -.5 L-3 -7 L11 -2.500 L4.500 6z" fill="#9c9c9c"/><path d="M-4 -3.500 L2 3.500 M1 -6 L7.500 1" stroke="#c9c9c9" stroke-width="1"/><path d="M0 5.500 l1.300 .4 m1 .3 l1.300 .4 m1 .3 l1.300 .4" stroke="#fff" stroke-width="1.200"/></g>
<g transform="translate(367,85)"><path d="M-15 -2.500 L-2 -10.500 L14 -4.500 V4 L1 12.500 L-14 3z" fill="#a2a2a2"/><path d="M-12.500 -2.500 L-2 -8.500 L12 -3.500 L1 4z" fill="#8a8a8a"/><path d="M-10 -2 L-.5 -7.500 M-7.500 -1 L2 -6.700 M-5 0 L4.500 -5.900 M-2.500 1 L7 -5.100 M0 2 L9.500 -4.300" stroke="#c4c4c4" stroke-width=".9"/><path d="M-14 3 L1 12.500 L14 4 M1 4 V12.500" stroke="#7a7a7a" stroke-width="1" fill="none"/></g>
<g transform="translate(413,85)"><rect x="-10.500" y="-7.500" width="16.500" height="16.500" fill="none" stroke="#222" stroke-width="1.300" stroke-dasharray="2.400 1.600"/><path d="M8.500 -10 L5.500 -5 M5 -9.500 L7 -6.500 M11.500 -7.500 L7 -6 M11 -4 L8 -5.500" stroke="#bdbdbd" stroke-width="1"/></g>
<g transform="translate(453,85)"><text x="0" y="5.500" font-family="Liberation Serif,serif" font-weight="bold" font-size="16" text-anchor="middle" fill="#111">1:?</text></g>
<g transform="translate(489.5,85)"><text x="0" y="7" font-family="Liberation Serif,serif" font-weight="bold" font-size="19" text-anchor="middle" fill="#111">A</text></g>
<g transform="translate(536,85)"><path d="M-10.500 -11 Q-5 -13 0 -11.500 Q5 -10.500 11 -12 V-2 H-10.500z" fill="#f6ee18"/><path d="M-12 -3.500 Q0 -1 11.500 -1.500 V5.500 H-10 V7 H-12z" fill="url(#gBr)" stroke="#6d5a2a" stroke-width=".5"/><path d="M-10 5.800 H11.500" stroke="#c21a1a" stroke-width="1.300"/><path d="M-10 6.500 H11.500 V10.500 Q4 10.500 0 12 Q-5 14 -8 12.500 L-10 12z" fill="url(#gRedF)"/><path d="M-11.500 -9 V8" stroke="#7a6a3a" stroke-width="1"/></g>
<g transform="translate(574,85)"><path d="M-10.500 -11 Q-5 -13 0 -11.500 Q5 -10.500 11 -12 V-2 H-10.500z" fill="#f6ee18"/><path d="M-10 4 H11 V10.500 Q4 10.500 0 12 Q-5 14 -8 12.500 L-10 12z" fill="#f6ee18"/><path d="M-12 -3.500 Q0 -1 11.500 -1.500 V4.500 H-10 V6 H-12z" fill="url(#gBr)" stroke="#6d5a2a" stroke-width=".5"/><path d="M-11.500 -9 V8 M11.500 -9 V9" stroke="#7a6a3a" stroke-width="1"/></g>
<g transform="translate(614,85)"><rect x="-1.500" y="-11.500" width="12.500" height="23" fill="#f6ee18"/><path d="M-11 -12 V12 M-6 -12 V12 M-3 -12 V12 M-1.500 -12 V12 M11 -11 V12" stroke="#5e5e58" stroke-width="1.100"/><path d="M-11 -6 h5 M-11 -1 h5 M-11 4 h5 M-11 9 h5" stroke="#8a8a8a" stroke-width="1"/><rect x="-9.500" y="-5" width="3" height="3" fill="#ddd"/><rect x="-9.500" y="5" width="3" height="3" fill="#ddd"/></g>
<g transform="translate(652,85)"><rect x="-6" y="-11.500" width="16.500" height="23" fill="#f6ee18"/><path d="M-11 -12 V12 M-7.500 -12 V12" stroke="#5e5e58" stroke-width="1.100"/><path d="M-7 -7.500 H3 V7.500 H-7" fill="#fbfbfb" stroke="#5e5e58" stroke-width="1"/><path d="M-7 -3.500 H-.5 V3.500 H-7" fill="#f6ee18" stroke="#5e5e58" stroke-width="1"/></g>
<g transform="translate(697.5,85)"><path d="M-7.300 -10.800 L3.700 -13.600 L8.200 -12.600 V13.300 L4.200 14.600 L-7.300 12.900z" fill="#857548" stroke="#4e4226" stroke-width=".6"/><path d="M-5.500 -9.300 L3.700 -10.600 V11.700 L-5.500 11z" fill="#98885c"/><path d="M-1.500 -9.800 L3.700 -10.600 V11.700 L-1.500 11.300z" fill="#f2f2f2"/><path d="M-7.300 -10.800 L-5.500 -10.400 V12.300 L-7.300 12.900z" fill="#5e5030"/><path d="M-5.500 -6 L3.700 -7.200" stroke="#5e5030" stroke-width="1.400"/><path d="M-5.500 11 L3.700 11.700 L4.200 14.600 L-7.300 12.900z" fill="#6c5d36"/></g>
<g transform="translate(735.5,85)"><path d="M-11.200 -10.600 L-8.500 -12.400 L1.200 -10.200 L5.600 -13.500 L12.300 -12.400 V14.200 L1.200 11.600 L-3 14 L-11.200 12.600z" fill="#857548" stroke="#4e4226" stroke-width=".6"/><path d="M-7.700 -8.300 L1.200 -6.500 V9 L-7.700 10.800z" fill="#f2f2f2"/><path d="M1.200 -6.500 L3.800 -8.500 V8.500 L1.200 9z" fill="#d0d0d0"/><path d="M5.600 -13.500 L12.300 -12.400 V14.200 L5.600 12.600z" fill="#98885c"/><path d="M-11.200 -10.600 L-7.700 -9.800 V11 L-11.200 12.600z" fill="#6c5d36"/><path d="M-7.700 -5.500 L1.200 -3.700 L3.800 -5.700" stroke="#5e5030" stroke-width="1.500" fill="none"/><path d="M-7.700 10.800 L1.200 9 L3.800 8.500 L5.600 12.600 L1.200 11.600 L-3 14 L-11.200 12.600z" fill="#6c5d36"/></g>
<g transform="translate(774,85)"><path d="M-9.900 -8.400 L9.200 -13.700 V4.900 L1.200 8.400 V14.600 L-2 14.600 L-9.900 12z" fill="#8d7d52" stroke="#4e4226" stroke-width=".7"/><path d="M-9.900 -8.400 L-6.500 -7 V13.300 L-9.900 12z" fill="#6c5d36"/><path d="M-6.500 -7 L-4.500 -7.600 V13.900 L-6.500 13.300z" fill="#a0906a"/><path d="M-4.500 -7.600 L1.200 -5.400 V14.600 L-2 14.600 L-4.500 13.900z" fill="#857548" stroke="#4e4226" stroke-width=".6"/><path d="M1.200 -5.400 L9.200 -13.700" stroke="#4e4226" stroke-width=".6"/></g>
<g transform="translate(812,85)"><path d="M-12 -13.700 L-8.900 -13.700 L6.200 -6.600 L11.900 -3.500 V12.500 Q6 15.500 1 14.200 L-3.600 12 Q-8 11 -12 13.300z" fill="#93835a" stroke="#4e4226" stroke-width=".6"/><path d="M-12 -13.700 L-10.300 -13.700 V12.300 L-12 13.300z" fill="#5e5030"/><path d="M-8.900 -13.700 V11.700" stroke="#5e5030" stroke-width=".8"/><path d="M-3.600 -4.800 L-1.600 -5.400 L11.900 -3.500 V12.500 Q6 15.500 1 14.200 L-3.600 12z" fill="#8a7a50" stroke="#4e4226" stroke-width=".6"/><path d="M-3.600 -4.800 L-1.600 -5.400 V13 L-3.600 12z" fill="#5e5030"/></g>
<g transform="translate(849,85)"><path d="M-8.500 -10.500 H9 Q12 -10 11.500 -5.500 L10 -2 L4.500 -.5 H-12.500z" fill="#94845a" stroke="#5a4c2c" stroke-width=".6"/><path d="M-12.500 -.5 H4.500 L10 -2 V-.2 L4.500 1.800 H-12.500z" fill="#6a5c36"/><path d="M-4.500 1.800 H-1 V13 H-4.500z" fill="#78683e"/><path d="M-1 1.800 H4 Q1 4 -1 8z" fill="#6a5c36"/><path d="M-1.500 2 V13" stroke="#4e4226" stroke-width=".8"/></g>
<g transform="translate(887,85)"><path d="M-8 -8 L-5 -12 H12 Q14 -11 12 -7 Q9 -1 10.500 5 L11 9 H-13.500 L-10 3z" fill="#94845a" stroke="#5a4c2c" stroke-width=".6"/><path d="M-10 -3 L-6 -8 H10" fill="none" stroke="#6a5c36" stroke-width=".9"/><path d="M-13.500 9 H11 L12 12.500 H-14.500z" fill="#6a5c36"/><path d="M-11 3 H9" stroke="#6a5c36" stroke-width=".9"/><path d="M-12 6 H10" stroke="#6a5c36" stroke-width=".9"/></g>
<g transform="translate(925.5,85)"><path d="M-7.500 -11.500 H7 Q10.500 -11 10.500 -7.500 V11.500 L7.500 13 Q6.500 7 1 6.500 H-11.500 L-10 -5z" fill="#94845a" stroke="#5a4c2c" stroke-width=".6"/><path d="M-11.500 6.500 H1 Q6.500 7 7.500 13 L6 13 Q5.500 9 0 8.500 H-12z" fill="#6a5c36"/></g>
<g transform="translate(963.5,85)"><path d="M-14.500 -6 L-3 -13 L14.500 -4 V3 L3 12.500 L-14.500 1.500z" fill="#9c9c9c" stroke="#7a7a7a" stroke-width=".8"/><path d="M-11.500 -5.500 L-3 -10.500 L11.500 -3.500 L3 2.500z" fill="#cdcdcd"/><path d="M-11.500 -5.500 L-3 -10.500 L-3 -7.500 L-9 -4z" fill="#e2e2e2"/><path d="M-14.500 -6 L3 4.500 V12.500 L-14.500 1.500z" fill="#b2b2b2" stroke="#7a7a7a" stroke-width=".7"/><path d="M3 4.500 L14.500 -4 V3 L3 12.500z" fill="#8c8c8c"/><path d="M-8 1 l4.500 2.800" stroke="#333" stroke-width="1.600"/></g>
<g transform="translate(1002,85)"><path d="M-14 -13 L8 -14 L14 -9 V12 L6 14.500 L5 8 L-7 6 L-8 11 L-14 9z" fill="#87774c" stroke="#4e4226" stroke-width=".8"/><path d="M6 -8 L14 -9 V12 L6 14.500z" fill="#98885c"/><path d="M-14 -13 L-6 -7.500 L6 -8 L8 -14z" fill="#6c5d36"/><path d="M-13 -7.500 L4 -4 V1.500 L-13 -2z" fill="#98885c" stroke="#3e3420" stroke-width=".9"/><path d="M-13 -.5 L4 3 V8 L-13 4.500z" fill="#98885c" stroke="#3e3420" stroke-width=".9"/><path d="M-6.500 -3.800 l4 .8 M-6.500 3.200 l4 .8" stroke="#222" stroke-width="1.500"/></g>
<g transform="translate(1040,85)"><path d="M-14 -13 L8 -14 L14 -9 V12 L6 14.500 L5 8 L-7 6 L-8 11 L-14 9z" fill="#87774c" stroke="#4e4226" stroke-width=".8"/><path d="M6 -8 L14 -9 V12 L6 14.500z" fill="#98885c"/><path d="M-14 -13 L-6 -7.500 L6 -8 L8 -14z" fill="#6c5d36"/><path d="M-13 -7.500 L4 -4 V8 L-13 4.500z" fill="#80703f" stroke="#4e4226" stroke-width=".9"/><path d="M-13 -1.500 L4 2 M-8 -6.500 V5.500 M-2.500 -5.300 V6.700" stroke="#4e4226" stroke-width=".9"/></g>
<g transform="translate(1079,85)"><path d="M-14 -9.500 L-2 -13.500 L14 -10 V8 L4 14 L-12 9z" fill="#87774c" stroke="#3e3420" stroke-width=".9"/><path d="M-14 -9.500 L-2 -13.500 L14 -10 L4 -5z" fill="#6c5d36" stroke="#3e3420" stroke-width=".8"/><path d="M4 -5 L14 -10 V8 L4 14z" fill="#98885c" stroke="#3e3420" stroke-width=".8"/><path d="M-12.500 -3 L4 1.500 M-12.500 3 L4 8" stroke="#3e3420" stroke-width=".9"/><path d="M-7 -4.500 l4.500 1.200 M-7 1.500 l4.500 1.300 M-7 7 l4.500 1.400" stroke="#222" stroke-width="1.500"/></g>
<g transform="translate(1117,85)"><path d="M-9 -10 L-4 -14 L6 -13.500 L9 -12 V11 L4 14.500 L-9 10z" fill="#87774c" stroke="#3e3420" stroke-width=".9"/><path d="M-9 -10 L3 -8 V14 L-9 10z" fill="#917f54" stroke="#3e3420" stroke-width=".9"/><path d="M3 -8 L6 -10 V12.500 L3 14z" fill="#6a5c36" stroke="#3e3420" stroke-width=".7"/><path d="M6 -10 L9 -12 V11 L6 12.500z" fill="#78683e"/><path d="M9.500 -9 V9" stroke="#87774c" stroke-width="1.600" stroke-dasharray="1.500 1.500"/><path d="M-1 2 v2.500" stroke="#555" stroke-width="1.200"/></g>
<g transform="translate(1154.5,85)"><path d="M-11.500 -12.500 L11 -13.500 V12 L-1 12 Q-3 9.500 -6 9.500 Q-9 9.500 -11.500 10.500z" fill="#87774c" stroke="#6a5c36" stroke-width=".8"/><path d="M9 -13.400 V12" stroke="#6c5d36" stroke-width="1.200"/></g>
<g transform="translate(1193.5,85)"><rect x="-13" y="-12" width="27" height="24" fill="#f3f3f3"/><g fill="#b9b3ad"><rect x="-13" y="-12" width="27" height="2"/><rect x="-13" y="-12" width="2" height="24"/><rect x="12" y="-12" width="2" height="24"/><rect x="-4.500" y="-12" width="2.500" height="24" fill="#7a6a5a"/><rect x="3.500" y="-12" width="2.500" height="24" fill="#7a6a5a"/><rect x="-11" y="-7" width="23" height="1.600"/><rect x="-11" y="-2" width="15" height="1.600"/><rect x="-11" y="3" width="15" height="1.600"/><rect x="-11" y="7.500" width="15" height="1.300"/><rect x="-13" y="11" width="27" height="1.500"/></g><rect x="-2" y="-10" width="5.500" height="3" fill="#f6e8d2"/><rect x="-2" y="-5.200" width="5.500" height="3" fill="#f6e8d2"/><rect x="-2" y="4.600" width="5.500" height="2.800" fill="#f0d9b5"/><rect x="-2" y="8.800" width="5.500" height="2.200" fill="#f0d9b5"/><rect x="-10.500" y="4.800" width="5.500" height="2.500" fill="#ddd"/><rect x="-10.500" y="8.900" width="5.500" height="2" fill="#ddd"/></g>
<g transform="translate(1237.5,85)"><rect x="-4" y="-13.500" width="8" height="3" fill="#1b1b1b"/><rect x="-3.800" y="-10.500" width="7.600" height="20.500" fill="url(#gLeg)" stroke="#222" stroke-width="1"/><rect x="-3.500" y="-7" width="7" height="1.500" fill="#444"/><rect x="-3" y="10" width="6" height="2" fill="#555"/><rect x="-3.800" y="12" width="7.600" height="2" fill="#1b1b1b"/></g>
<g transform="translate(1277,85)"><path d="M-12.500 -13 V3 M-10 -13 V1.500 M8 -13 V13 M11 -12 V12.500" stroke="#333" stroke-width="1.200" fill="none"/><path d="M-15 8 L-5 -4.500 H9 L4 8z" fill="#fbfbfb" stroke="#333" stroke-width="1"/><path d="M-15 8 H4 V11 H-15z" fill="url(#gShelfF)" stroke="#333" stroke-width=".8"/><path d="M4 8 L9 -4.500 L9 4 L4 11z" fill="#888" stroke="#333" stroke-width=".7"/><path d="M-12.500 11 V13 M-9.500 11 V13" stroke="#555" stroke-width="1"/><rect x="11.500" y="-3" width="2" height="6" fill="#444"/></g>
<g transform="translate(1315,85)"><path d="M-11 -5 H4 V-3.500 H-11z M-11 3 H4 V4.500 H-11z" fill="#444"/><path d="M-10 -3.500 H4 V3 H-7z" fill="#b9b9b9"/><path d="M4 -5 L9 -7.500 L11.500 -6.500 V1.500 L6.500 4.500 L4 4.500z" fill="#ececec" stroke="#333" stroke-width="1"/><path d="M6.500 -3.500 V4.500" stroke="#333" stroke-width=".8"/></g>
<g transform="translate(1353,85)"><path d="M-12.500 -13 V-2 M-10 -13 V-3 M9 -13 V13 M12 -12 V12.500 M13.500 -11 V11" stroke="#333" stroke-width="1.200" fill="none"/><path d="M-15 -.5 L-5 -12.500 H8 L6 -.5z" fill="#fbfbfb" stroke="#333" stroke-width="1"/><path d="M-15 -.5 H6 V12 H-15z" fill="#cfcfcf" stroke="#333" stroke-width="1"/><path d="M-15 5.500 H6" stroke="#333" stroke-width="1.100"/><path d="M6 -.5 L8 -12.500 L9 -3 V6 L6 12z" fill="#8a8a8a" stroke="#333" stroke-width=".7"/><path d="M-8 1.500 q3.500 2.500 7 0 M-8 7.500 q3.500 2.500 7 0" stroke="#444" stroke-width="1.100" fill="none"/><path d="M-12 12 v2 M3 12 v2" stroke="#555" stroke-width="1.200"/></g>
<g transform="translate(1400,85)"><rect x="-8.500" y="-13.500" width="17" height="26" fill="#fdfdfd" stroke="#222" stroke-width="1.200"/><rect x="-4.500" y="-10.500" width="9" height="20" fill="#fdfdfd" stroke="#222" stroke-width="1.100"/><path d="M-8.500 9.500 H8.500" stroke="#222" stroke-width="1"/><rect x="-8.500" y="12.500" width="4" height="1.800" fill="#bdbdbd"/><rect x="4.500" y="12.500" width="4" height="1.800" fill="#bdbdbd"/></g>
<g transform="translate(1437,85)"><path d="M-14 13 L-10.500 4 H-6 L-2.500 -10 H14 V13z" fill="#b9b9b9" stroke="#5a5a5a" stroke-width=".9"/><path d="M-6 4 H14 M-6.500 6 H14 M-14 11.200 H14" stroke="#5a5a5a" stroke-width=".9" fill="none"/></g>
<g transform="translate(1476,85)"><path d="M-13.500 -5 L-4.500 -13 H13.500 L6 -5z" fill="#c88d1c" stroke="#111" stroke-width=".9"/><path d="M-13.500 -5 H6 V11.500 H-13.500z" fill="#fff" stroke="#111" stroke-width="1.200"/><path d="M6 -5 L13.500 -13 V4.500 L6 11.500z" fill="#fff" stroke="#111" stroke-width="1.200"/><rect x="-13" y="-5" width="19" height="2.400" fill="#8a8a8a"/><rect x="-13" y="3" width="19" height="2.400" fill="#8a8a8a"/></g>
<g transform="translate(1513,85)"><path d="M-8 -8.500 L-2.500 -14 L8.500 -8.500 V9 L4 14 L-8 8.500z" fill="#fff" stroke="#222" stroke-width="1.100"/><path d="M-8 -8.500 L4 -3 V14 M4 -3 L8.500 -8.500 M-5.500 -7 V9.500 M2 -3.800 V13" stroke="#222" stroke-width="1" fill="none"/><path d="M-5.500 -1.500 L2 2 M-5.500 4 L2 7.500 M-5.500 -3 L2 .5" stroke="#222" stroke-width="1"/></g>
</svg>
<style>
#dlg{left:11px;top:119px;width:528px;height:515px;border-radius:7px;box-shadow:0 0 0 1px rgba(60,40,30,.75) inset,0 0 0 2px rgba(255,255,255,.45) inset,0 2px 9px 1px rgba(0,0,0,.55);
background:linear-gradient(180deg,rgba(0,0,0,0) 0,rgba(0,0,0,0) 493px,rgba(52,44,44,1) 497px,rgba(52,44,44,1) 100%),linear-gradient(90deg,#e6cdbb 0,#e6cfbe 12%,#dcbfb0 45%,#e6cfbf 62%,#e2c9ba 85%,#e6d0c0 100%)}
#dlgc{left:17px;top:148px;width:515px;height:479px;background:#f0f0f0;box-shadow:0 0 0 1px #fff inset,0 0 0 1px rgba(70,55,50,.8)}
.t11{position:absolute;font-size:11px;white-space:nowrap;line-height:13px}
.tree span{position:absolute;font-size:11px;white-space:nowrap;line-height:13px;letter-spacing:-0.050px}
</style>
<div id="dlg" class="abs"></div>
<div class="abs" style="left:485px;top:119px;width:47px;height:20px;border:1px solid rgba(90,70,60,.7);border-top:none;border-radius:0 0 5px 5px;box-shadow:0 0 0 1px rgba(255,255,255,.35) inset;background:linear-gradient(180deg,rgba(255,255,255,.25),rgba(255,255,255,.05) 50%,rgba(0,0,0,.03))"></div>
<svg class="abs" style="left:502px;top:123px" width="15" height="12" viewBox="0 0 15 12"><path d="M1.500 1 h3.800 l2.200 2.600 l2.200 -2.600 h3.800 l-4 4.800 l4.200 5.200 h-3.900 l-2.300 -2.900 l-2.300 2.900 h-3.900 l4.200 -5.200z" fill="#fff" stroke="#4a3f3a" stroke-width="1.100"/></svg>
<svg class="abs" style="left:18px;top:127px" width="15" height="13" viewBox="0 0 15 13"><rect x=".5" y=".5" width="14" height="12" fill="#dbe9e6" stroke="#b9c5c3"/><rect x="2" y="2" width="5" height="9" fill="#3d8d7c"/><rect x="8" y="2" width="2.500" height="9" fill="#c9ded9"/><rect x="11" y="2" width="2" height="5" fill="#e9f3f1"/></svg>
<div class="abs" style="left:40px;top:127px;font-size:12px;white-space:nowrap;letter-spacing:-0.110px;text-shadow:0 0 6px #fff,0 0 4px #fff">Materialauswahl [01.06.2014]</div>
<div id="dlgr" class="abs" style="left:532px;top:566px;width:6px;height:62px;background:linear-gradient(90deg,#6e5e5a 0,#6e5e5a 1px,#3e3030 1px,#3e3030 4px,#85746f 4px,#85746f 5px,#2a2020 5px);-webkit-mask-image:linear-gradient(180deg,transparent 0,#000 12%);mask-image:linear-gradient(180deg,transparent 0,#000 12%)"></div>
<div id="dlgc" class="abs"></div>
<div class="abs" style="left:29px;top:160px;width:233px;height:390px;background:#fff;border:1px solid #828790"></div>
<div class="tree">
<span style="left:35px;top:164px">Gleittürfront - S1500 - Füllungen</span>
<span style="left:35px;top:180px">Gleittürfront - S1500 - Profile</span>
<span style="left:35px;top:196px;letter-spacing:-0.150px">Innensystem - Legno 25mm</span>
<span style="left:54px;top:212px;letter-spacing:-0.170px">Dekor</span>
<span style="left:54px;top:228px;letter-spacing:-0.170px">Eurodekor Holz</span>
<span style="left:54px;top:244px;letter-spacing:-0.170px">Eurodekor Uni</span>
<span style="left:54px;top:260px;letter-spacing:-0.170px">Furnier</span>
<span style="left:54px;top:276px;letter-spacing:-0.170px">Sonderdekor</span>
<span style="left:52px;top:290px;width:87px;height:16px;background:#ededed"></span>
<span style="left:54px;top:292px;letter-spacing:-0.170px">Urban Structures</span>
<span style="left:35px;top:308px;letter-spacing:-0.150px">Innensystem - Legno 25mm - Kleiderstange</span>
<span style="left:35px;top:324px">Raum</span>
</div>
<svg class="abs" style="left:40px;top:208px" width="14" height="96" viewBox="0 0 14 96"><path d="M3.500 2 V91 M5 10.500 H12 M5 26.500 H12 M5 42.500 H12 M5 58.500 H12 M5 74.500 H12 M5 90.500 H12" stroke="#9a9a9a" stroke-width="1" stroke-dasharray="1 1" fill="none"/></svg>
<!-- material button -->
<div class="abs" style="left:273px;top:160px;width:248px;height:81px;background:#f0f0f0;border-top:1px solid #fff;border-left:1px solid #fff;border-right:2px solid #808080;border-bottom:2px solid #808080;box-shadow:0 0 0 0 #000"></div>
<div class="abs" style="left:275px;top:162px;width:75px;height:75px;background:repeating-linear-gradient(90deg,#c9a88f 0,#ceb097 3px,#c4a189 5px,#d0b299 9px,#c6a48c 11px,#cbab92 16px)"></div>
<div class="t11" style="left:353px;top:195px;letter-spacing:-0.100px">Matrix Eiche</div>
<svg class="abs" style="left:510px;top:194px" width="9" height="13" viewBox="0 0 9 13"><path d="M1.500 1.500 L6.500 6.500 L1.500 11.500z" fill="#b4def3" stroke="#1b2a55" stroke-width="1"/></svg>
<div class="abs" style="left:273px;top:249px;width:248px;height:186px;background:#fff;border:1px solid #828790"></div>
<!-- group -->
<div class="abs" style="left:274px;top:449px;width:247px;height:100px;border:1px solid #dcdcdc;border-radius:3px;box-shadow:0 0 0 1px #fbfbfb inset"></div>
<div class="t11" style="left:279px;top:443px;background:#f0f0f0;padding:0 3px;height:12px;line-height:12px">Anwenden auf</div>
<svg class="abs" style="left:277px;top:462px" width="14" height="38" viewBox="0 0 14 38">
<defs><radialGradient id="rb" cx=".4" cy=".35" r=".7"><stop offset="0" stop-color="#fff"/><stop offset="1" stop-color="#c9cdd0"/></radialGradient><radialGradient id="rd" cx=".4" cy=".35" r=".7"><stop offset="0" stop-color="#8fd6f5"/><stop offset=".5" stop-color="#1b6fa6"/><stop offset="1" stop-color="#0c3a66"/></radialGradient></defs>
<circle cx="6.700" cy="7" r="5.500" fill="url(#rb)" stroke="#8e8f8f"/><circle cx="6.700" cy="7" r="3.200" fill="url(#rd)"/>
<circle cx="6.700" cy="30" r="5.500" fill="url(#rb)" stroke="#8e8f8f"/></svg>
<div class="t11" style="left:294px;top:463px;letter-spacing:-0.180px">ein Teil</div>
<div class="t11" style="left:294px;top:486px;letter-spacing:-0.200px">alle Teile</div>
<div class="abs" style="left:294px;top:508px;width:13px;height:13px;border:1px solid #bcbcbc;background:#f8f8f8"></div>
<div class="abs" style="left:294px;top:530px;width:13px;height:13px;border:1px solid #bcbcbc;background:#f3f3f3"></div>
<svg class="abs" style="left:294px;top:530px" width="13" height="13" viewBox="0 0 13 13"><path d="M3 6.500 l2.200 3 l4.500 -7" stroke="#b5b5b5" stroke-width="1.600" fill="none"/></svg>
<div class="t11" style="left:310px;top:509px;color:#838383;letter-spacing:-0.270px">mit gleichem Material</div>
<div class="t11" style="left:310px;top:531px;color:#838383;letter-spacing:-0.120px">auf gleiche Teile</div>
<svg class="abs" style="left:37px;top:574px" width="33" height="30" viewBox="0 0 33 30"><defs><linearGradient id="wg" x1="0" x2="0" y1="0" y2="1"><stop offset="0" stop-color="#fff36b"/><stop offset=".5" stop-color="#f7d417"/><stop offset="1" stop-color="#e9a70c"/></linearGradient></defs>
<path d="M16.500 2 L31 27.500 H2z" fill="url(#wg)" stroke="#b9a98f" stroke-width="2" stroke-linejoin="round"/><path d="M16.500 5 L28.500 26 H4.500z" fill="none" stroke="#fff8b0" stroke-width=".8" stroke-linejoin="round" opacity=".7"/><path d="M14.900 9.500 h3.200 l-.6 10 h-2z" fill="#222"/><rect x="14.900" y="21.200" width="3.200" height="3.200" rx=".6" fill="#222"/></svg>
<div class="t11" style="left:82px;top:574px;letter-spacing:-0.130px">Die Oberflächenmuster können aus reproduktionstechnischen Gründen in ihrer<br>Farberscheinung vom Original abweichen.</div>

<style>
#inf{left:1420px;top:461px;width:382px;height:262px;border:1px solid #0c0808;box-shadow:0 0 0 1px #fff inset,2px 3px 9px 2px rgba(0,0,0,.62);
background:linear-gradient(180deg,rgba(0,0,0,0) 0,rgba(0,0,0,0) 40%,rgba(74,48,54,.95) 46%,#4a3036 100%),linear-gradient(90deg,#c6b3ae 0,#b9a39e 12%,#b09690 25%,#a3817c 40%,#9b7570 50%,#ab8c87 62%,#b9a09b 80%,#bfa8a3 100%)}
#inf:after{content:"";position:absolute;left:376px;top:24px;width:3px;height:124px;background:linear-gradient(180deg,#bfa8a3 0,#bfa8a3 90%,#4a3036 100%)}
#infc{left:1425px;top:485px;width:372px;height:233px;background:#fffff0;border:1px solid #fff;box-shadow:0 0 0 1px #0c0808 inset}
</style>
<div id="inf" class="abs"></div>
<div class="abs" style="left:1428px;top:467px;font-size:12px;letter-spacing:0.100px">Info</div>
<div class="abs" style="left:1779px;top:466px;width:17px;height:17px;border:1px solid #4a2a24;border-radius:3px;box-shadow:0 0 0 1px rgba(255,225,205,.55) inset;background:linear-gradient(180deg,#f3b49c 0,#e98a6a 35%,#c7421d 52%,#d9613c 75%,#f29a78 100%)"></div>
<svg class="abs" style="left:1782px;top:469px" width="11" height="11" viewBox="0 0 11 11"><path d="M3.300 3.500 L7.700 8 M7.700 3.500 L3.300 8" stroke="#4a3434" stroke-width="3.400" stroke-linecap="square" opacity=".8"/><path d="M3.500 3.700 L7.500 7.800 M7.500 3.700 L3.500 7.800" stroke="#fff" stroke-width="1.800" stroke-linecap="square"/></svg>
<div id="infc" class="abs"></div>
<pre class="abs" style="left:1433px;top:493px;margin:0;font-family:'Liberation Mono',monospace;font-size:13.330px;line-height:13px;color:#1c1c1c"><b style="text-decoration:underline;letter-spacing:0.940px">Blendenmaterial</b>
Legno 25
Oberfläche: Urban Structures – Matrix Eiche
Länge: 2653mm
Breite: 25mm
Dicke: 25mm
Gewicht: 1.2kg</pre>

<div id="viewborder2" class="abs"></div>
<div class="abs" style="left:0;top:868px;width:1920px;height:165px;background:#f0f0f0"></div>
<div class="abs" style="left:0;top:888px;width:1920px;height:1px;background:#fafafa"></div>
<svg class="abs" style="left:0;top:868px" width="260" height="22" viewBox="0 0 260 22">
<path d="M3.5 0.5 L10.5 19.5 H64.5 L71.5 0.5" fill="#f0f0f0" stroke="#444" stroke-width="1"/>
<path d="M163.5 19.5 L170.5 0.5 M163.5 19.5 H233 L240.5 0.5" fill="none" stroke="#444" stroke-width="1"/>
<path d="M66.5 0.5 L73.5 19.5 H160.5 L167.5 0.5" fill="#f0f0f0" stroke="#222" stroke-width="1"/>
<path d="M74 20.5 H161" stroke="#555" stroke-width="1"/>
<text x="34" y="14" font-size="12" font-style="italic" fill="#d0202a" font-family="Liberation Sans,sans-serif" letter-spacing="-0.9">Raum</text>
<text x="94" y="14" font-size="12" font-weight="bold" fill="#111" font-family="Liberation Sans,sans-serif" letter-spacing="-0.2">3D-Ansicht</text>
<text x="191" y="14" font-size="12" font-style="italic" fill="#d0202a" font-family="Liberation Sans,sans-serif" letter-spacing="-0.65">Notizen</text>
<g transform="translate(19.500,10.500) scale(.54)"><path d="M-14.500 -12 L5.500 -15 L6.500 9.500 L-12.500 13.500z" fill="#1e5fc8" stroke="#153f8f" stroke-width=".8"/><path d="M-12.500 13.500 L-14.500 -12 L-12.500 -12.300 L-10.800 13z" fill="#12408f"/><path d="M-10.500 -8.500 L3.500 -10.500 L4.300 6.500 L-9.300 9.500z" fill="#eef4ff"/><g fill="#4a6fb5"><circle cx="-6" cy="-4" r=".7"/><circle cx="-2.500" cy="-4.600" r=".7"/><circle cx="1" cy="-5.200" r=".7"/><circle cx="-5.500" cy="-.5" r=".7"/><circle cx="-2" cy="-1.100" r=".7"/><circle cx="1.500" cy="-1.700" r=".7"/><circle cx="-5" cy="3" r=".7"/><circle cx="-1.500" cy="2.400" r=".7"/><circle cx="2" cy="1.800" r=".7"/><circle cx="-4.500" cy="6.500" r=".7"/><circle cx="-1" cy="5.900" r=".7"/></g><path d="M0 3 L10 -4 L12.500 -1 L3 6.500 L-1 7z" fill="#5aa4e8" stroke="#2b5fa8" stroke-width=".7"/><circle cx="12" cy="-3" r="2" fill="#d23b3b"/></g>
<g><circle cx="80" cy="6" r="2" fill="#22a"/><circle cx="86" cy="9" r="2.200" fill="#2a4"/><circle cx="88" cy="15" r="2.400" fill="#c22"/><path d="M80 7 v6 l7 2 M81 13 l5 -4" stroke="#333" stroke-width=".8" fill="none"/></g>
<g><rect x="169.500" y="4.500" width="10" height="12" rx="1.500" fill="#fff" stroke="#777"/><path d="M171 4 h7" stroke="#555" stroke-width="1.600" stroke-dasharray="1 1"/></g>
</svg>
<div class="abs" style="left:5px;top:895px;width:1893px;height:74px;border:1px solid #646464;background:#f0f0f0"></div>
<pre class="abs" style="left:8px;top:898px;margin:0;font-family:'Liberation Mono',monospace;font-size:13.330px;line-height:13px;color:#2a2a2a">&gt; dx 4060
&gt; dx 4395
&gt; dy 2</pre>
<svg class="abs" style="left:1898px;top:895px" width="18" height="95" viewBox="0 0 18 95"><path d="M5 11 l4 -4 l4 4z" fill="#888"/><path d="M5 63 l4 4 l4 -4z" fill="#888"/></svg>
<svg class="abs" style="left:8px;top:972px" width="12" height="12" viewBox="0 0 12 12"><path d="M7 1.500 l-4 4 l4 4z" fill="#909090"/></svg>
<svg class="abs" style="left:1884px;top:972px" width="12" height="12" viewBox="0 0 12 12"><path d="M4 1.500 l4 4 l-4 4z" fill="#909090"/></svg>
<div class="abs" style="left:5px;top:989px;width:1887px;height:20px;border:1px solid #6a6a6a;border-top-color:#555;background:#fff"></div>
<div class="abs" style="left:1893px;top:990px;width:18px;height:18px;border:1px solid #707070;border-radius:3px;background:linear-gradient(180deg,#f6f6f6,#dcdcdc);font-weight:bold;font-size:13px;text-align:center;line-height:16px">?</div>
<div class="abs" style="left:0;top:1015px;width:1920px;height:1px;background:#d8d8d8"></div>
<div class="abs" style="left:1px;top:1019px;font-size:11px;letter-spacing:-0.200px;white-space:nowrap">Drücken Sie F1, um die Hilfe anzuzeigen.</div>
<div class="abs" style="left:1703px;top:1017px;width:54px;height:15px;background:#00ee10;font-size:11px;text-align:center;line-height:15px;color:#0a2a0a;letter-spacing:.6px">0 / 0 / 0</div>
<div class="abs" style="left:1760px;top:1016px;width:160px;height:17px;border-left:1px solid #a8a8a8;border-top:1px solid #a8a8a8;font-size:11px;line-height:16px;padding-left:1px;letter-spacing:-0.350px;white-space:nowrap">Gesamtpreis: 6.941,50 €</div>
<div class="abs" id="taskbar" style="left:0;top:1033px;width:1920px;height:5px;border-top:1px solid #2e1c1c;background:linear-gradient(90deg,#5a3434 0,#4b2a2a 30%,#5e3636 50%,#7a5450 66%,#4a2a2b 80%,#553333 100%)"></div><div class="abs" style="left:60px;top:1035px;width:42px;height:3px;border-radius:2px 2px 0 0;background:linear-gradient(180deg,#a58c8a,#7d5f5d)"></div><div class="abs" style="left:106px;top:1035px;width:42px;height:3px;border-radius:2px 2px 0 0;background:linear-gradient(180deg,#a58c8a,#7d5f5d)"></div><div class="abs" style="left:152px;top:1035px;width:42px;height:3px;border-radius:2px 2px 0 0;background:linear-gradient(180deg,#a58c8a,#7d5f5d)"></div><div class="abs" style="left:198px;top:1035px;width:38px;height:3px;border-radius:2px 2px 0 0;background:linear-gradient(180deg,#a58c8a,#7d5f5d)"></div><div class="abs" style="left:244px;top:1035px;width:42px;height:3px;border-radius:2px 2px 0 0;background:linear-gradient(180deg,#a58c8a,#7d5f5d)"></div><div class="abs" style="left:336px;top:1035px;width:42px;height:3px;border-radius:2px 2px 0 0;background:linear-gradient(180deg,#a58c8a,#7d5f5d)"></div><div class="abs" style="left:658px;top:1035px;width:42px;height:3px;border-radius:2px 2px 0 0;background:linear-gradient(180deg,#cbbcba,#8a6b69)"></div><div class="abs" style="left:382px;top:1035px;width:42px;height:3px;border-radius:2px 2px 0 0;background:linear-gradient(180deg,#c9b9b7,#7d5f5d)"></div><div class="abs" style="left:10px;top:1031px;width:33px;height:14px;border-radius:50%;background:radial-gradient(ellipse at 50% 60%,#e9863a 0,#b9c4d8 45%,#7e8fb0 100%);box-shadow:0 0 2px #223"></div>

</body></html>
